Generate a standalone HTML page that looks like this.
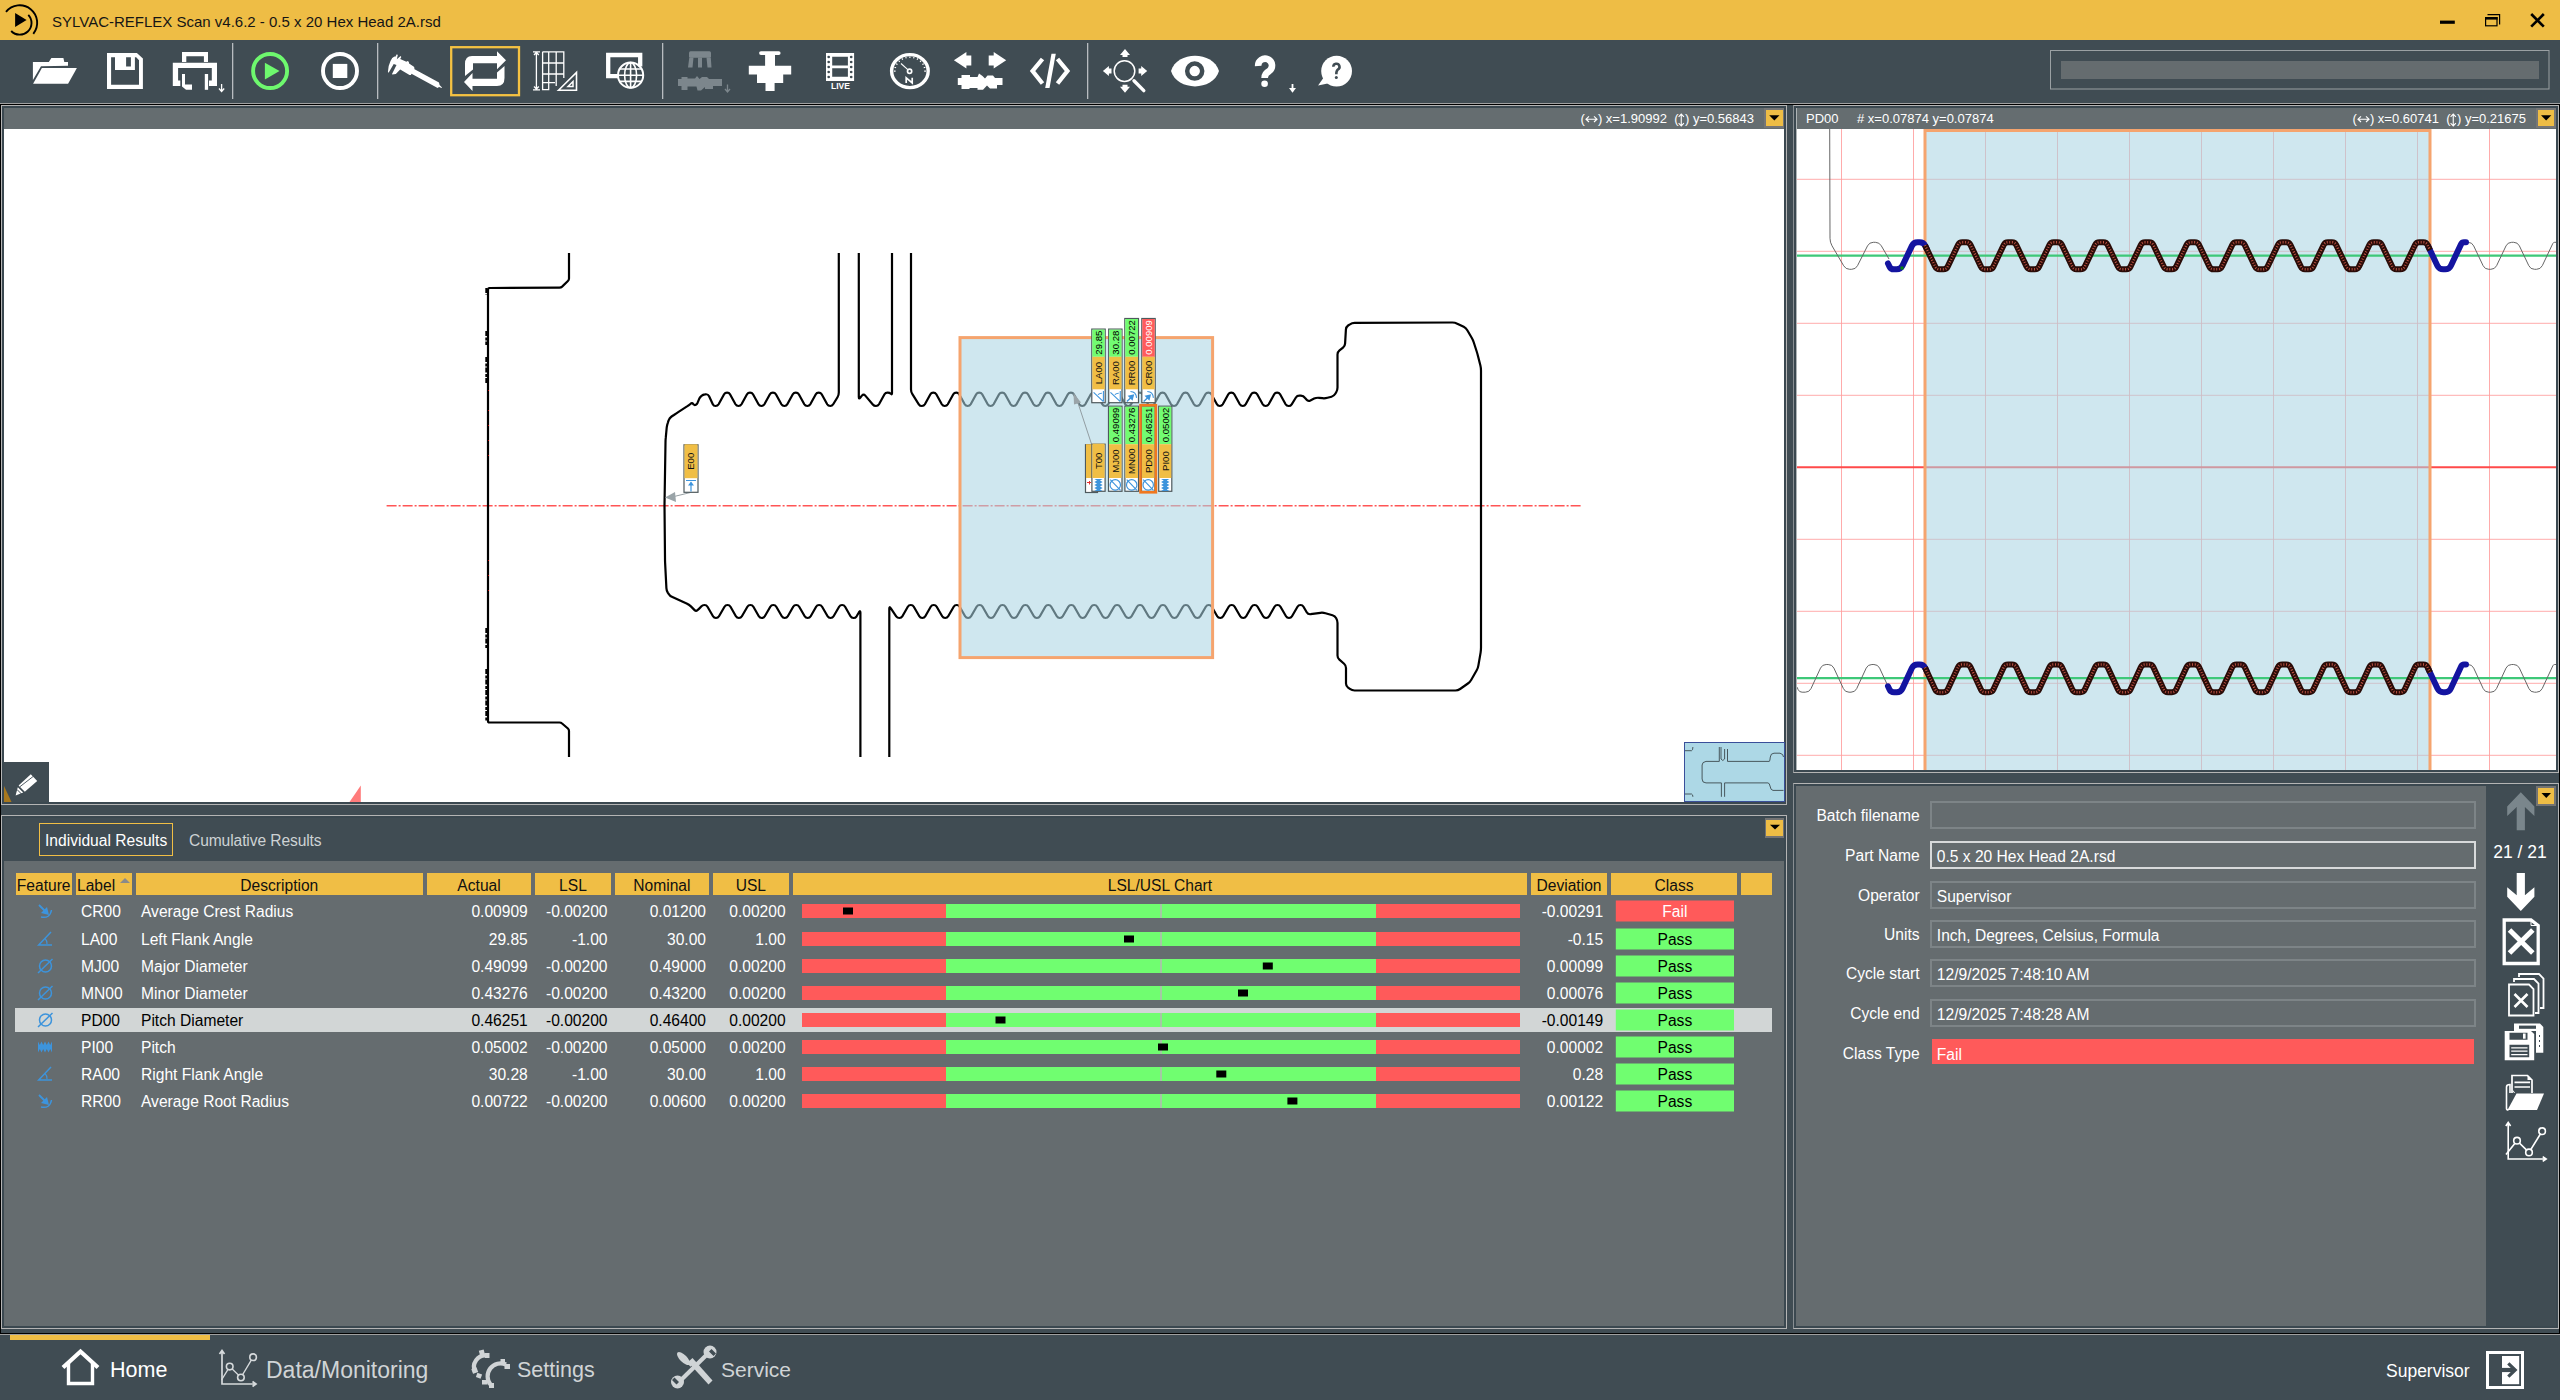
<!DOCTYPE html>
<html><head><meta charset="utf-8">
<style>
*{margin:0;padding:0;box-sizing:border-box}
html,body{width:2560px;height:1400px;overflow:hidden;background:#404c53;font-family:"Liberation Sans",sans-serif}
.a{position:absolute}
#title{left:0;top:0;width:2560px;height:40px;background:#eebd45}
#toolbar{left:0;top:40px;width:2560px;height:63px;background:#404c53}
#main{left:0;top:103px;width:2560px;height:1232px;background:#404c53;border-top:1px solid #a0a0a0}
.blk{background:#000}
.pnl{border:1px solid #b4b4b4}
.pin{border:2px solid #3b4850}
.hdr{background:#656d70;color:#fff;font-size:14px}
.gray{background:#656c6f}
.white{background:#fff}
</style></head><body>

<div id="title" class="a"></div>
<svg class="a" style="left:0;top:0" width="2560" height="103" viewBox="0 0 2560 103">
 <!-- logo -->
 <path d="M6 11.8 A17 17 0 1 1 33.3 33.8" fill="none" stroke="#000" stroke-width="1.9"/>
 <path d="M28.3 14.8 A11.5 11.5 0 0 1 11.2 31" fill="none" stroke="#000" stroke-width="1.9"/>
 <path d="M15.1 13.1 L26.6 20 L15.1 26.9Z" fill="#000"/>
 <!-- window controls -->
 <rect x="2440" y="20.6" width="14.8" height="3.2" fill="#000"/>
 <path d="M2487.5 14.6 H2499.6 V24.6" fill="none" stroke="#000" stroke-width="1.2"/>
 <rect x="2485.6" y="17.6" width="11.4" height="8.2" fill="none" stroke="#000" stroke-width="1.2"/>
 <rect x="2485" y="17" width="12.6" height="2.6" fill="#000"/>
 <path d="M2531.2 14 L2543.8 26.7 M2543.8 14 L2531.2 26.7" stroke="#000" stroke-width="2.6"/>
 <!-- toolbar bg -->
 <rect x="0" y="40" width="2560" height="63" fill="#404c53"/>
 <!-- separators -->
 <rect x="232" y="43" width="1.3" height="56" fill="#b8bcc0"/>
 <rect x="377" y="43" width="1.3" height="56" fill="#b8bcc0"/>
 <rect x="662" y="43" width="1.3" height="56" fill="#b8bcc0"/>
 <rect x="1087" y="43" width="1.3" height="56" fill="#b8bcc0"/>
 <g fill="#fff">
  <!-- folder -->
  <path d="M32.9 61.9 H48.8 L51.4 58 H63.4 L64.3 61.9 H68 V65.8 L41 66.2 L32.9 80Z"/>
  <path d="M41.9 67.9 H76.9 L68.1 83.8 H33.1Z"/>
  <!-- save -->
  <path fill-rule="evenodd" d="M107 52.9 H136.9 L142.9 58.5 V89 H107Z M111.1 57.2 V84.7 H139 V60.3 L136.2 57.2 H134.9 V70.1 H115 V57.2Z M126.1 57.2 V66.6 H130.9 V57.2Z"/>
  <!-- print -->
  <path fill-rule="evenodd" d="M182 52 H208 V61.9 H203.9 V56.2 H186.3 V61.9 H182Z"/>
  <path d="M172.8 62.8 H217 V86 H209 V80.4 H211.8 V67.9 H178.1 V80.4 H180.3 V86 H172.8Z"/>
  <path d="M182 74 H185 V84.6 H192 V89.8 H186 L182 86.5Z"/>
  <rect x="204.8" y="74" width="3.3" height="15.8"/>
  <path d="M221.6 84 V91 M219 88.5 L221.6 91.5 L224.2 88.5" stroke="#fff" stroke-width="1.3" fill="none"/>
 </g>
 <!-- play -->
 <circle cx="270.1" cy="71" r="17" fill="none" stroke="#6ef86e" stroke-width="3.9"/>
 <path d="M264.9 62.8 L279.5 71 L264.9 79.4Z" fill="#6ef86e"/>
 <!-- stop -->
 <circle cx="340" cy="71" r="17" fill="none" stroke="#fff" stroke-width="3.9"/>
 <rect x="332.8" y="63.9" width="14.5" height="14.1" fill="#fff"/>
 <!-- caliper -->
 <path fill="#fff" d="M396.8 54.2 L397.8 54.9 L396.8 59.3 L400.6 56.1 L401.3 56.9 L400.2 59 L406.4 61.7 L407.4 61 L408.8 61.7 L409.1 63.6 L413.9 66.7 L414.6 68.2 L414.1 68.9 L439 82.6 L439.6 85 L442 87.4 L441.7 88.1 L439 87.1 L437.6 88 L411.5 73.7 L410.9 75.1 L409.5 75.1 L400.2 69.6 L395.8 74.1 L392.3 74.4 L392 73.9 L396.5 65.1 L393.7 64.1 L388.6 72.7 L387.9 72 Q388 66 390.5 61 Q392 57.5 394.4 56.6 L395.3 56.8Z"/>
 <!-- repeat selected box -->
 <rect x="451.2" y="47.2" width="67.8" height="48" fill="none" stroke="#f5c242" stroke-width="2.3"/>
 <g fill="#fff">
  <path d="M465 76 V64 Q465 56 472 56 H497 V51.2 L506 60.2 L497 69.2 V63.3 H473 V69.5 L465 76Z"/>
  <path d="M504.5 66 V78 Q504.5 86 497 86 H472.5 V91 L464 82 L472.5 73 V78.8 H497 V72.5 L504.5 66Z"/>
 </g>
 <!-- grid + triangle -->
 <g fill="none" stroke="#fff" stroke-width="1.3">
  <path d="M536.4 52 V89.5 M533 51.8 H540 M533 89.8 H540 M534 55 L536.4 52.5 L538.8 55 M534 86.5 L536.4 89 L538.8 86.5"/>
  <path d="M542.6 51.8 H563.8 V78 M542.6 51.8 V89.6 H548.7 V51.8 M556.2 51.8 V86 M542.6 63 H563.8 M542.6 74 H563.8 M542.6 82.6 H555"/>
  <path d="M558.5 90.2 L576.5 72.5 V90.2Z" stroke-width="1.6"/>
  <path d="M568 86.5 L573 81.5 V86.5Z" stroke-width="1.5"/>
 </g>
 <!-- globe screen -->
 <path d="M619 76.2 H608.2 V55 H640.2 V66.5" fill="none" stroke="#fff" stroke-width="4.3"/>
 <g fill="none" stroke="#fff" stroke-width="1.6">
  <circle cx="630.6" cy="75.2" r="12.6" stroke-width="2"/>
  <ellipse cx="630.6" cy="75.2" rx="6" ry="12.6"/>
  <path d="M630.6 62.6 V87.8 M618 75.2 H643.2 M619.5 69 H641.7 M619.5 81.4 H641.7"/>
 </g>
 <!-- disabled icon -->
 <g fill="#7c868c">
  <rect x="689" y="51.2" width="22" height="6.6" rx="1.5"/>
  <path d="M689.3 57.5 H693.5 L692.5 67.5 H688Z M698 57.5 H702 V67.5 H698Z M706.5 57.5 H710.8 L711.5 67.5 H707.5Z"/>
  <path d="M678 79 H681.5 V77 H687.5 V78.5 H695 L697 76 L699.5 79 L702 77 H707 L709 79 H722 V86 H713 V89 H705 V87 L701 90.5 H697.5 L696.5 86.5 H687.5 V90 H681.5 V86 H678Z"/>
  <path d="M727.5 84.5 V91.5 M725 89 L727.5 92 L730 89" stroke="#7c868c" stroke-width="1.3" fill="none"/>
 </g>
 <!-- T shape -->
 <g fill="#fff">
  <rect x="759.1" y="51.2" width="21.5" height="3.8" rx="1.9"/>
  <path d="M765.1 55 H775 V65.8 H791.2 V74.5 H783.2 V83 H774.6 V90.9 H765.5 V83 H757 V74.5 H748.8 V65.8 H765.1Z"/>
 </g>
 <!-- film live -->
 <path fill-rule="evenodd" fill="#fff" d="M826 52.9 H854.1 V81.1 H826Z M832.2 56.8 V65.4 H847.9 V56.8Z M832.2 68.2 V76.8 H847.9 V68.2Z"/>
 <g fill="#404c53">
  <circle cx="828.7" cy="57" r="1.35"/><circle cx="828.7" cy="62" r="1.35"/><circle cx="828.7" cy="67" r="1.35"/><circle cx="828.7" cy="72" r="1.35"/><circle cx="828.7" cy="77" r="1.35"/>
  <circle cx="851.2" cy="57" r="1.35"/><circle cx="851.2" cy="62" r="1.35"/><circle cx="851.2" cy="67" r="1.35"/><circle cx="851.2" cy="72" r="1.35"/><circle cx="851.2" cy="77" r="1.35"/>
 </g>
 <text x="840.5" y="89.4" font-family="Liberation Sans" font-weight="bold" font-size="8.5" fill="#fff" text-anchor="middle">LIVE</text>
 <!-- gauge -->
 <ellipse cx="909.9" cy="71.1" rx="18.3" ry="16.5" fill="none" stroke="#fff" stroke-width="3.4"/>
 <path d="M895.6 71.1L893.9 71.1M896.1 67.7L894.4 67.3M897.5 64.5L896.0 63.7M899.8 61.8L898.6 60.7M902.8 59.7L901.9 58.4M906.2 58.4L905.8 56.9M909.9 57.9L909.9 56.4M913.6 58.4L914.0 56.9M917.0 59.7L917.9 58.4M920.0 61.8L921.2 60.7M922.3 64.5L923.8 63.7M923.7 67.7L925.4 67.3M924.2 71.1L925.9 71.1" stroke="#fff" stroke-width="1.1" fill="none"/>
 <path d="M901 63.5 L907.8 69.6" stroke="#fff" stroke-width="1.1"/>
 <circle cx="909.6" cy="71.2" r="2.1" fill="none" stroke="#fff" stroke-width="1.7"/>
 <path d="M906.2 83 V77.8 L912.2 83 V77.8" fill="none" stroke="#fff" stroke-width="1.7" stroke-linejoin="miter"/>
 <!-- arrows -->
 <g fill="#fff">
  <path d="M953.9 60.2 L966.4 52 V55.6 H971.3 V65.4 H966.4 V68.4Z"/>
  <path d="M1006.2 60.2 L993.7 52 V55.6 H988.7 V65.4 H993.7 V68.4Z"/>
  <path d="M957.8 78 H961.5 V75 H970 V77 H977.5 L979 73.5 L982.5 76 L985 78.5 L987.5 75.5 H993 L995 78 H1002.5 V85 H997 V88.5 H990 L987 85.5 L983 89.8 H977.5 V88 H969.5 V89 H961.5 V85 H957.8Z"/>
 </g>
 <!-- code -->
 <g fill="none" stroke="#fff" stroke-width="4.3">
  <path d="M1042.5 59 L1032.6 71 L1042.5 83.5"/>
  <path d="M1057.5 59 L1067.4 71 L1057.5 83.5"/>
 </g>
 <path d="M1051.5 53.8 H1055.8 L1049.5 88.1 H1045.2Z" fill="#fff"/>
 <!-- zoom -->
 <circle cx="1124.5" cy="71.1" r="10.3" fill="none" stroke="#fff" stroke-width="1.5"/>
 <path d="M1134 80.8 L1143.8 90.6" stroke="#fff" stroke-width="3.4" stroke-linecap="round"/>
 <g fill="#fff">
  <path d="M1125 49 L1130 55 H1127.5 V57 H1122.5 V55 H1120Z"/>
  <path d="M1125 92.8 L1130 86.8 H1127.5 V84.8 H1122.5 V86.8 H1120Z"/>
  <path d="M1102.9 71.1 L1108.9 66.1 V68.6 H1111.5 V73.6 H1108.9 V76.1Z"/>
  <path d="M1147.2 71.1 L1141.2 66.1 V68.6 H1138.6 V73.6 H1141.2 V76.1Z"/>
 </g>
 <!-- eye -->
 <path d="M1171 71.1 C1177 50.7 1213 50.7 1219 71.1 C1213 91.5 1177 91.5 1171 71.1Z" fill="#fff"/>
 <circle cx="1194.7" cy="71.1" r="7.5" fill="none" stroke="#404c53" stroke-width="4.5"/>
 <!-- question -->
 <path d="M1258.2 66 A6.9 6.9 0 1 1 1269.3 71 Q1264.6 73.5 1264.6 78" fill="none" stroke="#fff" stroke-width="6.6"/>
 <circle cx="1264.6" cy="83.8" r="3.3" fill="#fff"/>
 <path d="M1292.5 84 V89.5" stroke="#fff" stroke-width="1.8"/>
 <path d="M1289 88 L1292.5 92.7 L1296 88Z" fill="#fff"/>
 <!-- bubble -->
 <circle cx="1336.6" cy="71.1" r="15.4" fill="#fff"/>
 <path d="M1324 77 L1318.1 85.4 L1330 83Z" fill="#fff"/>
 <path d="M1333.3 66.8 A3.1 3.1 0 1 1 1337.8 69.6 Q1336.3 70.6 1336.3 74.3" fill="none" stroke="#404c53" stroke-width="2.6"/>
 <circle cx="1336.3" cy="77.6" r="1.5" fill="#404c53"/>
 <!-- search box -->
 <rect x="2050.5" y="50.5" width="2498.5" height="39" fill="none"/>
 <rect x="2050.5" y="50.5" width="498.5" height="38.5" fill="none" stroke="#9aa0a3" stroke-width="1"/>
 <rect x="2061" y="61" width="478" height="18" fill="#656c6f"/>
</svg>
<div class="a" style="left:52px;top:12px;font-size:15px;color:#151515;white-space:nowrap;line-height:20px">SYLVAC-REFLEX Scan v4.6.2 - 0.5 x 20 Hex Head 2A.rsd</div>

<div class="a" style="left:0;top:103px;width:2560px;height:1px;background:#a0a0a0"></div>
<div class="a blk" style="left:0;top:104px;width:2560px;height:1px"></div>
<div class="a blk" style="left:0;top:104px;width:1px;height:1230px"></div>
<div class="a blk" style="left:2559px;top:104px;width:1px;height:1230px"></div>
<div class="a blk" style="left:0;top:1333px;width:2560px;height:1px"></div>
<div class="a" style="left:0;top:1334px;width:2560px;height:1px;background:#a0a0a0"></div>

<!-- left canvas panel -->
<div class="a pnl" style="left:1px;top:105px;width:1786px;height:700px"></div>
<div class="a pin" style="left:2px;top:106px;width:1784px;height:698px"></div>
<div class="a hdr" style="left:4px;top:108px;width:1780px;height:21px"></div>
<div class="a white" style="left:4px;top:129px;width:1780px;height:673px"></div>
<svg class="a" style="left:4px;top:129px" width="1780" height="673" viewBox="4 129 1780 673">
<line x1="386.6" y1="505.7" x2="1582" y2="505.7" stroke="#ff5555" stroke-width="1.5" stroke-dasharray="10 2 2 2"/>
<path d="M569.0 253.0L569.0 278.5Q569.0 280.0 567.9 281.0L562.1 286.6Q561.0 287.6 559.5 287.6L489.5 288.0Q488.0 288.0 488.0 289.5L488.0 721.0Q488.0 722.5 489.5 722.5L559.5 722.5Q561.0 722.5 562.1 723.5L567.9 728.5Q569.0 729.5 569.0 731.0L569.0 757.0" fill="none" stroke="#000" stroke-width="2.2" stroke-linejoin="round"/>
<path d="M664.5 505.0L665.5 442.6Q665.5 440.0 665.8 437.4L666.7 427.6Q667.0 425.0 667.9 422.6L668.6 420.4Q669.5 418.0 671.6 416.5L673.9 415.0Q676.0 413.5 678.2 412.1L687.4 406.1Q689.0 405.0 690.5 403.8L690.5 403.8Q692.0 402.5 693.2 404.0L693.6 404.4Q694.5 405.5 695.8 404.8L695.8 404.8Q697.0 404.0 697.6 402.7L699.2 398.8Q700.0 397.0 701.5 395.8L701.5 395.8Q703.0 394.6 704.9 394.4L705.5 394.3Q708.0 394.0 709.1 396.3L712.8 404.2Q713.6 406.0 715.6 406.0L715.6 406.0Q717.6 406.0 718.6 404.3L724.1 394.3Q725.1 392.6 727.1 392.6L727.1 392.6Q729.1 392.6 730.0 394.3L735.5 404.3Q736.5 406.0 738.5 406.0L738.5 406.0Q740.5 406.0 741.5 404.3L747.0 394.3Q748.0 392.6 750.0 392.6L750.0 392.6Q752.0 392.6 753.0 394.3L758.5 404.3Q759.4 406.0 761.4 406.0L761.4 406.0Q763.4 406.0 764.4 404.3L769.9 394.3Q770.9 392.6 772.9 392.6L772.9 392.6Q774.9 392.6 775.9 394.3L781.4 404.3Q782.4 406.0 784.4 406.0L784.4 406.0Q786.4 406.0 787.3 404.3L792.8 394.3Q793.8 392.6 795.8 392.6L795.8 392.6Q797.8 392.6 798.8 394.3L804.3 404.3Q805.3 406.0 807.3 406.0L807.3 406.0Q809.3 406.0 810.3 404.3L815.8 394.3Q816.7 392.6 818.7 392.6L818.7 392.6Q820.7 392.6 821.7 394.3L827.2 404.3Q828.2 406.0 830.2 406.0L830.2 406.0Q832.2 406.0 833.2 404.3L837.5 397.2Q838.8 395.0 838.8 392.4L838.8 253.0" fill="none" stroke="#000" stroke-width="2.2" stroke-linejoin="round"/>
<path d="M858.8 253.0L858.8 396.9Q858.8 399.5 860.4 397.5L861.9 395.6Q863.6 393.6 865.3 395.6L872.8 404.5Q874.0 406.0 876.0 406.0L876.0 406.0Q878.0 406.0 879.0 404.3L884.5 394.3Q885.5 392.6 887.5 392.6L887.8 392.6Q889.5 392.6 890.8 393.8L890.8 393.8Q892.0 395.0 892.0 393.3L892.0 253.0" fill="none" stroke="#000" stroke-width="2.2" stroke-linejoin="round"/>
<path d="M911.0 253.0L911.0 389.4Q911.0 392.0 912.4 394.2L918.8 404.3Q919.9 406.0 921.9 406.0L921.9 406.0Q923.9 406.0 924.9 404.3L930.4 394.3Q931.3 392.6 933.3 392.6L933.3 392.6Q935.3 392.6 936.3 394.3L941.8 404.3Q942.8 406.0 944.8 406.0L944.8 406.0Q946.8 406.0 947.8 404.3L953.3 394.3Q954.3 392.6 956.3 392.6L956.3 392.6Q958.3 392.6 959.2 394.3L964.7 404.3Q965.7 406.0 967.7 406.0L967.7 406.0Q969.7 406.0 970.7 404.3L976.2 394.3Q977.2 392.6 979.2 392.6L979.2 392.6Q981.2 392.6 982.2 394.3L987.7 404.3Q988.6 406.0 990.6 406.0L990.6 406.0Q992.6 406.0 993.6 404.3L999.1 394.3Q1000.1 392.6 1002.1 392.6L1002.1 392.6Q1004.1 392.6 1005.1 394.3L1010.6 404.3Q1011.6 406.0 1013.6 406.0L1013.6 406.0Q1015.6 406.0 1016.5 404.3L1022.0 394.3Q1023.0 392.6 1025.0 392.6L1025.0 392.6Q1027.0 392.6 1028.0 394.3L1033.5 404.3Q1034.5 406.0 1036.5 406.0L1036.5 406.0Q1038.5 406.0 1039.5 404.3L1045.0 394.3Q1045.9 392.6 1047.9 392.6L1047.9 392.6Q1049.9 392.6 1050.9 394.3L1056.4 404.3Q1057.4 406.0 1059.4 406.0L1059.4 406.0Q1061.4 406.0 1062.4 404.3L1067.9 394.3Q1068.9 392.6 1070.9 392.6L1070.9 392.6Q1072.9 392.6 1073.8 394.3L1079.3 404.3Q1080.3 406.0 1082.3 406.0L1082.3 406.0Q1084.3 406.0 1085.3 404.3L1090.8 394.3Q1091.8 392.6 1093.8 392.6L1093.8 392.6Q1095.8 392.6 1096.8 394.3L1102.3 404.3Q1103.2 406.0 1105.2 406.0L1105.2 406.0Q1107.2 406.0 1108.2 404.3L1113.7 394.3Q1114.7 392.6 1116.7 392.6L1116.7 392.6Q1118.7 392.6 1119.7 394.3L1125.2 404.3Q1126.2 406.0 1128.2 406.0L1128.2 406.0Q1130.2 406.0 1131.1 404.3L1136.6 394.3Q1137.6 392.6 1139.6 392.6L1139.6 392.6Q1141.6 392.6 1142.6 394.3L1148.1 404.3Q1149.1 406.0 1151.1 406.0L1151.1 406.0Q1153.1 406.0 1154.1 404.3L1159.6 394.3Q1160.5 392.6 1162.5 392.6L1162.5 392.6Q1164.5 392.6 1165.5 394.3L1171.0 404.3Q1172.0 406.0 1174.0 406.0L1174.0 406.0Q1176.0 406.0 1177.0 404.3L1182.5 394.3Q1183.5 392.6 1185.5 392.6L1185.5 392.6Q1187.5 392.6 1188.4 394.3L1193.9 404.3Q1194.9 406.0 1196.9 406.0L1196.9 406.0Q1198.9 406.0 1199.9 404.3L1205.4 394.3Q1206.4 392.6 1208.4 392.6L1208.4 392.6Q1210.4 392.6 1211.4 394.3L1216.9 404.3Q1217.8 406.0 1219.8 406.0L1219.8 406.0Q1221.8 406.0 1222.8 404.3L1228.3 394.3Q1229.3 392.6 1231.3 392.6L1231.3 392.6Q1233.3 392.6 1234.3 394.3L1239.8 404.3Q1240.8 406.0 1242.8 406.0L1242.8 406.0Q1244.8 406.0 1245.7 404.3L1251.2 394.3Q1252.2 392.6 1254.2 392.6L1254.2 392.6Q1256.2 392.6 1257.2 394.3L1262.7 404.3Q1263.7 406.0 1265.7 406.0L1265.7 406.0Q1267.7 406.0 1268.7 404.3L1274.2 394.3Q1275.1 392.6 1277.1 392.6L1277.1 392.6Q1279.1 392.6 1280.1 394.3L1285.6 404.3Q1286.6 406.0 1288.6 406.0L1288.6 406.0Q1290.6 406.0 1291.7 404.3L1295.9 397.5Q1297.3 395.3 1299.9 395.6L1300.9 395.7Q1303.5 396.0 1305.1 398.0L1306.4 399.5Q1308.0 401.5 1310.4 400.4L1314.1 398.6Q1316.5 397.5 1319.1 397.8L1322.4 398.2Q1325.0 398.5 1327.5 397.8L1331.5 396.7Q1334.0 396.0 1335.3 393.8L1336.2 392.2Q1337.5 390.0 1337.5 387.4L1337.5 354.6Q1337.5 352.0 1339.5 350.4L1343.0 347.6Q1345.0 346.0 1345.1 343.4L1345.9 329.6Q1346.0 327.0 1348.1 325.5L1349.9 324.3Q1352.0 322.8 1354.6 322.8L1452.4 322.5Q1455.0 322.5 1457.3 323.7L1463.7 326.8Q1466.0 328.0 1467.3 330.2L1471.7 337.8Q1473.0 340.0 1473.8 342.5L1476.7 351.5Q1477.5 354.0 1478.1 356.5L1480.4 365.5Q1481.0 368.0 1481.0 370.6L1481.0 647.4Q1481.0 650.0 1480.6 652.6L1478.4 665.4Q1478.0 668.0 1476.7 670.3L1471.3 679.7Q1470.0 682.0 1467.9 683.5L1460.1 689.0Q1458.0 690.5 1455.4 690.5L1354.6 690.5Q1352.0 690.5 1349.9 688.9L1348.1 687.6Q1346.0 686.0 1346.0 683.4L1346.0 668.1Q1346.0 665.5 1344.1 663.8L1339.4 659.7Q1337.5 658.0 1337.5 655.4L1337.5 623.1Q1337.5 620.5 1336.2 618.2L1336.2 618.2Q1335.0 616.0 1332.5 615.3L1325.5 613.2Q1323.0 612.5 1320.4 612.8L1310.6 614.2Q1308.0 614.5 1306.7 612.2L1303.5 606.7Q1302.5 605.0 1300.5 605.0L1300.5 605.0Q1298.5 605.0 1297.5 606.7L1292.0 616.3Q1291.0 618.0 1289.0 618.0L1289.0 618.0Q1287.0 618.0 1286.0 616.3L1280.5 606.7Q1279.5 605.0 1277.5 605.0L1277.5 605.0Q1275.5 605.0 1274.5 606.7L1269.1 616.3Q1268.1 618.0 1266.1 618.0L1266.1 618.0Q1264.1 618.0 1263.1 616.3L1257.6 606.7Q1256.6 605.0 1254.6 605.0L1254.6 605.0Q1252.6 605.0 1251.6 606.7L1246.2 616.3Q1245.2 618.0 1243.2 618.0L1243.2 618.0Q1241.2 618.0 1240.2 616.3L1234.7 606.7Q1233.7 605.0 1231.7 605.0L1231.7 605.0Q1229.7 605.0 1228.7 606.7L1223.2 616.3Q1222.2 618.0 1220.2 618.0L1220.2 618.0Q1218.2 618.0 1217.2 616.3L1211.8 606.7Q1210.8 605.0 1208.8 605.0L1208.8 605.0Q1206.8 605.0 1205.8 606.7L1200.3 616.3Q1199.3 618.0 1197.3 618.0L1197.3 618.0Q1195.3 618.0 1194.3 616.3L1188.9 606.7Q1187.9 605.0 1185.9 605.0L1185.9 605.0Q1183.9 605.0 1182.9 606.7L1177.4 616.3Q1176.4 618.0 1174.4 618.0L1174.4 618.0Q1172.4 618.0 1171.4 616.3L1165.9 606.7Q1164.9 605.0 1162.9 605.0L1162.9 605.0Q1160.9 605.0 1159.9 606.7L1154.5 616.3Q1153.5 618.0 1151.5 618.0L1151.5 618.0Q1149.5 618.0 1148.5 616.3L1143.0 606.7Q1142.0 605.0 1140.0 605.0L1140.0 605.0Q1138.0 605.0 1137.0 606.7L1131.6 616.3Q1130.6 618.0 1128.6 618.0L1128.6 618.0Q1126.6 618.0 1125.6 616.3L1120.1 606.7Q1119.1 605.0 1117.1 605.0L1117.1 605.0Q1115.1 605.0 1114.1 606.7L1108.6 616.3Q1107.6 618.0 1105.6 618.0L1105.6 618.0Q1103.6 618.0 1102.6 616.3L1097.2 606.7Q1096.2 605.0 1094.2 605.0L1094.2 605.0Q1092.2 605.0 1091.2 606.7L1085.7 616.3Q1084.7 618.0 1082.7 618.0L1082.7 618.0Q1080.7 618.0 1079.7 616.3L1074.3 606.7Q1073.3 605.0 1071.3 605.0L1071.3 605.0Q1069.3 605.0 1068.3 606.7L1062.8 616.3Q1061.8 618.0 1059.8 618.0L1059.8 618.0Q1057.8 618.0 1056.8 616.3L1051.3 606.7Q1050.3 605.0 1048.3 605.0L1048.3 605.0Q1046.3 605.0 1045.3 606.7L1039.9 616.3Q1038.9 618.0 1036.9 618.0L1036.9 618.0Q1034.9 618.0 1033.9 616.3L1028.4 606.7Q1027.4 605.0 1025.4 605.0L1025.4 605.0Q1023.4 605.0 1022.4 606.7L1017.0 616.3Q1016.0 618.0 1014.0 618.0L1014.0 618.0Q1012.0 618.0 1011.0 616.3L1005.5 606.7Q1004.5 605.0 1002.5 605.0L1002.5 605.0Q1000.5 605.0 999.5 606.7L994.0 616.3Q993.0 618.0 991.0 618.0L991.0 618.0Q989.0 618.0 988.0 616.3L982.6 606.7Q981.6 605.0 979.6 605.0L979.6 605.0Q977.6 605.0 976.6 606.7L971.1 616.3Q970.1 618.0 968.1 618.0L968.1 618.0Q966.1 618.0 965.1 616.3L959.7 606.7Q958.7 605.0 956.7 605.0L956.7 605.0Q954.7 605.0 953.7 606.7L948.2 616.3Q947.2 618.0 945.2 618.0L945.2 618.0Q943.2 618.0 942.2 616.3L936.7 606.7Q935.7 605.0 933.7 605.0L933.7 605.0Q931.7 605.0 930.7 606.7L925.3 616.3Q924.3 618.0 922.3 618.0L922.3 618.0Q920.3 618.0 919.3 616.3L913.8 606.7Q912.8 605.0 910.8 605.0L910.8 605.0Q908.8 605.0 907.8 606.7L902.4 616.3Q901.4 618.0 899.4 618.0L899.4 618.0Q897.4 618.0 896.2 616.3L890.7 608.2Q889.3 606.0 889.3 608.6L889.3 757.0" fill="none" stroke="#000" stroke-width="2.2" stroke-linejoin="round"/>
<path d="M664.5 505.0L665.0 557.4Q665.0 560.0 665.1 562.6L666.4 588.1Q666.5 590.7 667.9 592.9L668.6 593.8Q670.0 596.0 672.4 597.1L686.6 603.5Q689.0 604.6 690.9 606.4L694.6 610.1Q696.0 611.5 697.5 610.2L697.5 610.2Q699.0 609.0 700.3 607.5L701.2 606.5Q702.5 605.0 704.5 605.0L704.5 605.0Q706.5 605.0 707.5 606.7L713.0 616.3Q714.0 618.0 716.0 618.0L716.0 618.0Q718.0 618.0 719.0 616.3L724.5 606.7Q725.5 605.0 727.5 605.0L727.5 605.0Q729.5 605.0 730.5 606.7L735.9 616.3Q736.9 618.0 738.9 618.0L738.9 618.0Q740.9 618.0 741.9 616.3L747.4 606.7Q748.4 605.0 750.4 605.0L750.4 605.0Q752.4 605.0 753.4 606.7L758.8 616.3Q759.8 618.0 761.8 618.0L761.8 618.0Q763.8 618.0 764.8 616.3L770.3 606.7Q771.3 605.0 773.3 605.0L773.3 605.0Q775.3 605.0 776.3 606.7L781.8 616.3Q782.8 618.0 784.8 618.0L784.8 618.0Q786.8 618.0 787.8 616.3L793.2 606.7Q794.2 605.0 796.2 605.0L796.2 605.0Q798.2 605.0 799.2 606.7L804.7 616.3Q805.7 618.0 807.7 618.0L807.7 618.0Q809.7 618.0 810.7 616.3L816.1 606.7Q817.1 605.0 819.1 605.0L819.1 605.0Q821.1 605.0 822.1 606.7L827.6 616.3Q828.6 618.0 830.6 618.0L830.6 618.0Q832.6 618.0 833.6 616.3L839.1 606.7Q840.1 605.0 842.1 605.0L842.1 605.0Q844.1 605.0 845.1 606.7L850.5 616.3Q851.5 618.0 853.5 618.0L853.5 618.0Q855.5 618.0 856.6 616.3L859.0 612.2Q860.4 610.0 860.4 612.6L860.4 757.0" fill="none" stroke="#000" stroke-width="2.2" stroke-linejoin="round"/>
<path d="M486.3 288V295M486.3 331V345M486.3 357V383M486.3 628V648M486.3 669V721" stroke="#000" stroke-width="2" stroke-dasharray="5 1.5 3 1"/>
<path d="M488.5 390V400M488.5 410V470M488.5 560V600" stroke="#e00" stroke-width="1" stroke-dasharray="1 14" opacity="0.8"/>
<rect x="960" y="337.6" width="252.6" height="320" fill="rgba(170,212,226,0.565)" stroke="#f5a46e" stroke-width="3"/>
<path d="M1091.5 444 L1077 400" stroke="#8a9498" stroke-width="0.9"/><path d="M1073.5 393 L1081 402.5 L1074 404.5Z" fill="#9aa4a8"/>
<path d="M690.5 492.5 L672 497" stroke="#8a9498" stroke-width="0.9"/><path d="M665 497.5 L675 492 L676 502Z" fill="#9aa4a8"/>
<rect x="684.0" y="444.8" width="14.0" height="47.5" fill="#fff" stroke="#4e595d" stroke-width="1.2"/><rect x="684.5" y="444.3" width="13.0" height="33.89999999999998" fill="#f0be45"/><text transform="translate(694.3 461.25) rotate(-90)" text-anchor="middle" font-size="9.6" fill="#111">E00</text><path d="M686.0 480.5 H696.0 M691.0 491.5 V482.5" stroke="#3d94dc" stroke-width="1.2"/><path d="M691.0 481.5 L688.0 485.5 H694.0Z" fill="#3d94dc"/>
<rect x="1091.8" y="329.1" width="13.400000000000091" height="73.59999999999997" fill="#fff" stroke="#4e595d" stroke-width="1.2"/><rect x="1092.3" y="329.6" width="12.400000000000091" height="27.19999999999999" fill="#72fc72"/><text transform="translate(1101.8 342.70000000000005) rotate(-90)" text-anchor="middle" font-size="9.6" fill="#000">29.85</text><rect x="1092.3" y="356.8" width="12.400000000000091" height="32.5" fill="#f0be45"/><text transform="translate(1101.8 373.05) rotate(-90)" text-anchor="middle" font-size="9.6" fill="#111">LA00</text><path d="M1093.6 392.45 L1103.4 401.55 M1103.4 391.05 V401.55 M1098.0 394.65 Q1100.0 393.05 1101.9 393.25" fill="none" stroke="#3d94dc" stroke-width="1.1"/>
<rect x="1108.7" y="329.1" width="13.299999999999955" height="73.59999999999997" fill="#fff" stroke="#4e595d" stroke-width="1.2"/><rect x="1109.2" y="329.6" width="12.299999999999955" height="27.19999999999999" fill="#72fc72"/><text transform="translate(1118.6499999999999 342.70000000000005) rotate(-90)" text-anchor="middle" font-size="9.6" fill="#000">30.28</text><rect x="1109.2" y="356.8" width="12.299999999999955" height="32.5" fill="#f0be45"/><text transform="translate(1118.6499999999999 373.05) rotate(-90)" text-anchor="middle" font-size="9.6" fill="#111">RA00</text><path d="M1110.4499999999998 392.45 L1120.25 401.55 M1120.25 391.05 V401.55 M1114.85 394.65 Q1116.85 393.05 1118.75 393.25" fill="none" stroke="#3d94dc" stroke-width="1.1"/>
<rect x="1124.8" y="318.5" width="13.700000000000045" height="84.19999999999999" fill="#fff" stroke="#4e595d" stroke-width="1.2"/><rect x="1125.3" y="319" width="12.700000000000045" height="37.80000000000001" fill="#72fc72"/><text transform="translate(1134.95 337.4) rotate(-90)" text-anchor="middle" font-size="9.6" fill="#000">0.00722</text><rect x="1125.3" y="356.8" width="12.700000000000045" height="32.5" fill="#f0be45"/><text transform="translate(1134.95 373.05) rotate(-90)" text-anchor="middle" font-size="9.6" fill="#111">RR00</text><path d="M1126.8500000000001 401.55 L1131.15 397.45" stroke="#3d94dc" stroke-width="1.4"/><path d="M1134.25 394.15 L1127.65 395.65 L1132.5500000000002 400.65Z" fill="#3d94dc"/><path d="M1130.45 391.45 Q1136.15 391.65 1136.5500000000002 397.85" fill="none" stroke="#3d94dc" stroke-width="1.1"/>
<rect x="1141.8" y="318.5" width="13.400000000000091" height="84.19999999999999" fill="#fff" stroke="#4e595d" stroke-width="1.2"/><rect x="1142.3" y="319" width="12.400000000000091" height="37.80000000000001" fill="#ff5c5c"/><text transform="translate(1151.8 337.4) rotate(-90)" text-anchor="middle" font-size="9.6" fill="#fff">0.00909</text><rect x="1142.3" y="356.8" width="12.400000000000091" height="32.5" fill="#f0be45"/><text transform="translate(1151.8 373.05) rotate(-90)" text-anchor="middle" font-size="9.6" fill="#111">CR00</text><path d="M1143.7 401.55 L1148.0 397.45" stroke="#3d94dc" stroke-width="1.4"/><path d="M1151.1 394.15 L1144.5 395.65 L1149.4 400.65Z" fill="#3d94dc"/><path d="M1147.3 391.45 Q1153.0 391.65 1153.4 397.85" fill="none" stroke="#3d94dc" stroke-width="1.1"/>
<rect x="1085.5" y="444.7" width="12" height="47.80000000000001" fill="#fff" stroke="#4e595d" stroke-width="1.2"/><rect x="1086" y="444.2" width="11" height="33.80000000000001" fill="#f0be45"/><text transform="translate(1094.8 461.1) rotate(-90)" text-anchor="middle" font-size="9.6" fill="#111"></text>
<path d="M1087 482.5 H1091 M1089.5 481 V484.5" stroke="#e83030" stroke-width="1"/>
<rect x="1091.9" y="444.2" width="13.199999999999818" height="47.10000000000002" fill="#fff" stroke="#4e595d" stroke-width="1.2"/><rect x="1092.4" y="443.7" width="12.199999999999818" height="34.30000000000001" fill="#f0be45"/><text transform="translate(1101.8 460.85) rotate(-90)" text-anchor="middle" font-size="9.6" fill="#111">T00</text><path d="M1094.3 478.9 H1102.7  L1100.0 480.4 L1102.7 481.9 L1100.0 483.4 L1102.7 484.9 L1100.0 486.4 L1102.7 487.9 L1100.0 489.4 L1102.7 490.9 H1094.3 L1097.0 489.4 L1094.3 487.9 L1097.0 486.4 L1094.3 484.9 L1097.0 483.4 L1094.3 481.9 L1097.0 480.4Z" fill="#3d94dc"/>
<rect x="1108.5" y="406.2" width="13.5" height="85.10000000000002" fill="#fff" stroke="#4e595d" stroke-width="1.2"/><rect x="1109" y="406.7" width="12.5" height="37.5" fill="#72fc72"/><text transform="translate(1118.55 424.95) rotate(-90)" text-anchor="middle" font-size="9.6" fill="#000">0.49099</text><rect x="1109" y="444.2" width="12.5" height="33.80000000000001" fill="#f0be45"/><text transform="translate(1118.55 461.1) rotate(-90)" text-anchor="middle" font-size="9.6" fill="#111">MJ00</text><circle cx="1115.25" cy="484.9" r="5.2" fill="none" stroke="#3d94dc" stroke-width="1.15"/><path d="M1110.25 479.7 L1120.55 490.29999999999995" stroke="#3d94dc" stroke-width="1.15"/>
<rect x="1124.9" y="406.2" width="13.599999999999909" height="85.10000000000002" fill="#fff" stroke="#4e595d" stroke-width="1.2"/><rect x="1125.4" y="406.7" width="12.599999999999909" height="37.5" fill="#72fc72"/><text transform="translate(1135.0 424.95) rotate(-90)" text-anchor="middle" font-size="9.6" fill="#000">0.43276</text><rect x="1125.4" y="444.2" width="12.599999999999909" height="33.80000000000001" fill="#f0be45"/><text transform="translate(1135.0 461.1) rotate(-90)" text-anchor="middle" font-size="9.6" fill="#111">MN00</text><circle cx="1131.7" cy="484.9" r="5.2" fill="none" stroke="#3d94dc" stroke-width="1.15"/><path d="M1126.7 479.7 L1137.0 490.29999999999995" stroke="#3d94dc" stroke-width="1.15"/>
<rect x="1141.5" y="406.2" width="13.400000000000091" height="85.10000000000002" fill="#fff" stroke="#4e595d" stroke-width="1.2"/><rect x="1142" y="406.7" width="12.400000000000091" height="37.5" fill="#72fc72"/><text transform="translate(1151.5 424.95) rotate(-90)" text-anchor="middle" font-size="9.6" fill="#000">0.46251</text><rect x="1142" y="444.2" width="12.400000000000091" height="33.80000000000001" fill="#f0be45"/><text transform="translate(1151.5 461.1) rotate(-90)" text-anchor="middle" font-size="9.6" fill="#111">PD00</text><circle cx="1148.2" cy="484.9" r="5.2" fill="none" stroke="#3d94dc" stroke-width="1.15"/><path d="M1143.2 479.7 L1153.5 490.29999999999995" stroke="#3d94dc" stroke-width="1.15"/><rect x="1140.5" y="405.2" width="15.400000000000091" height="87.10000000000002" fill="none" stroke="#f07820" stroke-width="2.6"/>
<rect x="1158.7" y="406.2" width="13.099999999999909" height="85.10000000000002" fill="#fff" stroke="#4e595d" stroke-width="1.2"/><rect x="1159.2" y="406.7" width="12.099999999999909" height="37.5" fill="#72fc72"/><text transform="translate(1168.55 424.95) rotate(-90)" text-anchor="middle" font-size="9.6" fill="#000">0.05002</text><rect x="1159.2" y="444.2" width="12.099999999999909" height="33.80000000000001" fill="#f0be45"/><text transform="translate(1168.55 461.1) rotate(-90)" text-anchor="middle" font-size="9.6" fill="#111">PI00</text><path d="M1161.05 478.9 H1169.45  L1166.75 480.4 L1169.45 481.9 L1166.75 483.4 L1169.45 484.9 L1166.75 486.4 L1169.45 487.9 L1166.75 489.4 L1169.45 490.9 H1161.05 L1163.75 489.4 L1161.05 487.9 L1163.75 486.4 L1161.05 484.9 L1163.75 483.4 L1161.05 481.9 L1163.75 480.4Z" fill="#3d94dc"/>
</svg>
<div class="a" style="left:1500px;top:110px;width:254px;text-align:right;font-size:13px;line-height:17px;color:#fff;white-space:pre">(<svg width="13" height="10" style="vertical-align:-1px" viewBox="0 0 13 10"><path d="M1 5.2H12 M4 2.4L1 5.2L4 8 M9 2.4L12 5.2L9 8" stroke="#fff" stroke-width="1.15" fill="none"/></svg>) x=1.90992  (<svg width="6.5" height="14" style="vertical-align:-4px" viewBox="0 0 6.5 14"><path d="M3.25 1V13 M0.6 3.8L3.25 1L5.9 3.8 M0.6 10.2L3.25 13L5.9 10.2" stroke="#fff" stroke-width="1.1" fill="none"/></svg>) y=0.56843</div>
<div class="a" style="left:1764px;top:108px;width:20px;height:20px;background:#767676"></div>
<div class="a" style="left:1766px;top:110px;width:16.5px;height:16px;background:#eebd45"></div>
<svg class="a" style="left:1766px;top:110px" width="17" height="16"><path d="M3.2 5.2 H13.5 L8.35 10.5Z" fill="#000"/></svg>
<!-- pencil box -->
<div class="a" style="left:4px;top:762px;width:45px;height:40px;background:#404c53"></div>
<svg class="a" style="left:4px;top:762px" width="45" height="40" viewBox="4 762 45 40">
 <path d="M4 786 L11.5 802 H4Z" fill="#a8781e"/>
 <path d="M30.8 774.2 L37.2 781 L24.8 791.8 L18.6 785.6Z" fill="#fff"/>
 <path d="M17.8 787.2 L23.2 792.6 L15.6 795.6Z" fill="#fff"/>
 <path d="M19.8 786.8 L33.5 776.2" stroke="#404c53" stroke-width="0.9"/>
 <path d="M17 789.5 L21.5 794" stroke="#404c53" stroke-width="1"/>
</svg>
<svg class="a" style="left:345px;top:785px" width="20" height="17"><path d="M15.8 0.5 V17 H4.5Z" fill="#ff7b7b"/></svg>
<!-- minimap -->
<svg class="a" style="left:1684px;top:742px" width="101" height="60" viewBox="1684 742 101 60">
 <rect x="1684.5" y="742.5" width="100" height="59" fill="#add8e6" stroke="#3a4f9a" stroke-width="1"/>
 <g fill="none" stroke="#3c4a4e" stroke-width="0.9">
  <path d="M1685 750.7 H1691.5 Q1692.9 750.5 1692.9 747"/>
  <path d="M1685 794 H1691.5 Q1692.9 794.5 1692.9 796.8"/>
  <path d="M1719.3 747 V761.4 H1706 Q1702.1 762 1702.1 765 V779 Q1702.1 782.9 1706 782.9 H1721.4 V796.8 M1724.6 796.8 V782.9 H1767.9 Q1769.5 783 1770 786 Q1770.7 790.4 1773 790.4 H1783.5"/>
  <path d="M1721 747 V759 Q1722.8 762 1724.6 759 V749 M1727.5 749 V761.4 H1769.3 Q1770 761 1770.3 757 Q1770.7 753.2 1774 753.2 H1780 Q1783.5 754 1783.5 757"/>
 </g>
</svg>


<!-- right plot panel -->
<div class="a pnl" style="left:1793px;top:105px;width:766px;height:668px;border-left-color:#888e92"></div>
<div class="a pin" style="left:1794px;top:106px;width:764px;height:666px"></div>
<div class="a hdr" style="left:1796px;top:108px;width:760px;height:21px"></div>
<div class="a white" style="left:1796px;top:129px;width:760px;height:641px"></div>
<svg class="a" style="left:1797px;top:129px" width="759" height="641" viewBox="1797 129 759 641">
<path d="M1841.5 129V770M1913.5 129V770M1985.5 129V770M2057.5 129V770M2129.5 129V770M2201.5 129V770M2273.5 129V770M2345.5 129V770M2417.5 129V770M2489.5 129V770M1797 179.3H2556M1797 251.3H2556M1797 323.3H2556M1797 395.3H2556M1797 539.3H2556M1797 611.3H2556M1797 683.3H2556M1797 755.3H2556" stroke="#ff9c9c" stroke-width="1" fill="none" opacity="0.85"/>
<path d="M1797 467.3H2556" stroke="#ff4a4a" stroke-width="2"/>
<rect x="1925" y="129" width="505" height="645" fill="rgba(170,212,226,0.565)"/>
<path d="M1925 775V130.5H2430V775" fill="none" stroke="#f5a46e" stroke-width="3"/>
<path d="M1797 255.7H2556M1797 678.2H2556" stroke="#3ec878" stroke-width="2.2"/>
<path d="M1829.7 129.0L1830.0 238.3Q1830.0 242.3 1832.0 245.8L1843.7 265.8Q1845.7 269.3 1849.7 269.3L1851.7 269.3Q1855.7 269.3 1857.5 265.7L1867.5 245.9Q1869.3 242.3 1873.3 242.3L1875.3 242.3Q1879.3 242.3 1881.3 245.8L1889.0 259.0" fill="none" stroke="#666" stroke-width="1"/>
<path d="M2462.0 242.3L2468.0 242.3Q2472.0 242.3 2473.7 245.9L2483.1 265.7Q2484.8 269.3 2488.8 269.3L2490.8 269.3Q2494.8 269.3 2496.6 265.7L2506.0 245.9Q2507.7 242.3 2511.7 242.3L2513.7 242.3Q2517.7 242.3 2519.4 245.9L2528.8 265.7Q2530.5 269.3 2534.5 269.3L2536.5 269.3Q2540.5 269.3 2542.3 265.7L2552.8 243.5Q2553.4 242.3 2554.7 242.3L2556.0 242.3" fill="none" stroke="#666" stroke-width="1"/>
<path d="M1888.0 263.5L1889.4 266.4Q1890.7 269.3 1893.9 269.3L1896.7 269.3Q1900.7 269.3 1902.5 265.7L1911.9 245.9Q1913.6 242.3 1917.6 242.3L1919.6 242.3Q1923.6 242.3 1925.3 245.9L1927.0 249.4" fill="none" stroke="#1414a0" stroke-width="6" stroke-linecap="round" stroke-linejoin="round"/>
<path d="M2428.0 245.9L2437.4 265.7Q2439.2 269.3 2443.2 269.3L2445.2 269.3Q2449.2 269.3 2450.9 265.7L2461.1 244.1Q2462.0 242.3 2464.0 242.3L2466.0 242.3" fill="none" stroke="#1414a0" stroke-width="6" stroke-linecap="round" stroke-linejoin="round"/>
<path d="M1925.0 245.2L1935.2 266.6Q1936.4 269.3 1939.4 269.3L1943.4 269.3Q1946.4 269.3 1947.7 266.6L1958.0 245.0Q1959.3 242.3 1962.3 242.3L1966.3 242.3Q1969.3 242.3 1970.6 245.0L1980.9 266.6Q1982.1 269.3 1985.1 269.3L1989.1 269.3Q1992.1 269.3 1993.4 266.6L2003.7 245.0Q2005.0 242.3 2008.0 242.3L2012.0 242.3Q2015.0 242.3 2016.3 245.0L2026.6 266.6Q2027.8 269.3 2030.8 269.3L2034.8 269.3Q2037.8 269.3 2039.1 266.6L2049.4 245.0Q2050.7 242.3 2053.7 242.3L2057.7 242.3Q2060.7 242.3 2062.0 245.0L2072.3 266.6Q2073.5 269.3 2076.5 269.3L2080.5 269.3Q2083.5 269.3 2084.8 266.6L2095.1 245.0Q2096.4 242.3 2099.4 242.3L2103.4 242.3Q2106.4 242.3 2107.7 245.0L2118.0 266.6Q2119.2 269.3 2122.2 269.3L2126.2 269.3Q2129.2 269.3 2130.5 266.6L2140.8 245.0Q2142.1 242.3 2145.1 242.3L2149.1 242.3Q2152.1 242.3 2153.4 245.0L2163.7 266.6Q2164.9 269.3 2167.9 269.3L2171.9 269.3Q2174.9 269.3 2176.2 266.6L2186.5 245.0Q2187.8 242.3 2190.8 242.3L2194.8 242.3Q2197.8 242.3 2199.1 245.0L2209.4 266.6Q2210.7 269.3 2213.7 269.3L2217.7 269.3Q2220.7 269.3 2221.9 266.6L2232.2 245.0Q2233.5 242.3 2236.5 242.3L2240.5 242.3Q2243.5 242.3 2244.8 245.0L2255.1 266.6Q2256.3 269.3 2259.3 269.3L2263.3 269.3Q2266.3 269.3 2267.6 266.6L2277.9 245.0Q2279.2 242.3 2282.2 242.3L2286.2 242.3Q2289.2 242.3 2290.5 245.0L2300.8 266.6Q2302.0 269.3 2305.0 269.3L2309.0 269.3Q2312.0 269.3 2313.3 266.6L2323.6 245.0Q2324.9 242.3 2327.9 242.3L2331.9 242.3Q2334.9 242.3 2336.2 245.0L2346.5 266.6Q2347.8 269.3 2350.8 269.3L2354.8 269.3Q2357.8 269.3 2359.0 266.6L2369.3 245.0Q2370.6 242.3 2373.6 242.3L2377.6 242.3Q2380.6 242.3 2381.9 245.0L2392.2 266.6Q2393.4 269.3 2396.4 269.3L2400.4 269.3Q2403.4 269.3 2404.7 266.6L2415.0 245.0Q2416.3 242.3 2419.3 242.3L2423.3 242.3Q2426.3 242.3 2427.6 245.0L2430.0 250.1" fill="none" stroke="#2a0c08" stroke-width="6" stroke-linejoin="round"/>
<path d="M1925.0 245.2L1935.2 266.6Q1936.4 269.3 1939.4 269.3L1943.4 269.3Q1946.4 269.3 1947.7 266.6L1958.0 245.0Q1959.3 242.3 1962.3 242.3L1966.3 242.3Q1969.3 242.3 1970.6 245.0L1980.9 266.6Q1982.1 269.3 1985.1 269.3L1989.1 269.3Q1992.1 269.3 1993.4 266.6L2003.7 245.0Q2005.0 242.3 2008.0 242.3L2012.0 242.3Q2015.0 242.3 2016.3 245.0L2026.6 266.6Q2027.8 269.3 2030.8 269.3L2034.8 269.3Q2037.8 269.3 2039.1 266.6L2049.4 245.0Q2050.7 242.3 2053.7 242.3L2057.7 242.3Q2060.7 242.3 2062.0 245.0L2072.3 266.6Q2073.5 269.3 2076.5 269.3L2080.5 269.3Q2083.5 269.3 2084.8 266.6L2095.1 245.0Q2096.4 242.3 2099.4 242.3L2103.4 242.3Q2106.4 242.3 2107.7 245.0L2118.0 266.6Q2119.2 269.3 2122.2 269.3L2126.2 269.3Q2129.2 269.3 2130.5 266.6L2140.8 245.0Q2142.1 242.3 2145.1 242.3L2149.1 242.3Q2152.1 242.3 2153.4 245.0L2163.7 266.6Q2164.9 269.3 2167.9 269.3L2171.9 269.3Q2174.9 269.3 2176.2 266.6L2186.5 245.0Q2187.8 242.3 2190.8 242.3L2194.8 242.3Q2197.8 242.3 2199.1 245.0L2209.4 266.6Q2210.7 269.3 2213.7 269.3L2217.7 269.3Q2220.7 269.3 2221.9 266.6L2232.2 245.0Q2233.5 242.3 2236.5 242.3L2240.5 242.3Q2243.5 242.3 2244.8 245.0L2255.1 266.6Q2256.3 269.3 2259.3 269.3L2263.3 269.3Q2266.3 269.3 2267.6 266.6L2277.9 245.0Q2279.2 242.3 2282.2 242.3L2286.2 242.3Q2289.2 242.3 2290.5 245.0L2300.8 266.6Q2302.0 269.3 2305.0 269.3L2309.0 269.3Q2312.0 269.3 2313.3 266.6L2323.6 245.0Q2324.9 242.3 2327.9 242.3L2331.9 242.3Q2334.9 242.3 2336.2 245.0L2346.5 266.6Q2347.8 269.3 2350.8 269.3L2354.8 269.3Q2357.8 269.3 2359.0 266.6L2369.3 245.0Q2370.6 242.3 2373.6 242.3L2377.6 242.3Q2380.6 242.3 2381.9 245.0L2392.2 266.6Q2393.4 269.3 2396.4 269.3L2400.4 269.3Q2403.4 269.3 2404.7 266.6L2415.0 245.0Q2416.3 242.3 2419.3 242.3L2423.3 242.3Q2426.3 242.3 2427.6 245.0L2430.0 250.1" fill="none" stroke="#c85848" stroke-width="2.4" stroke-dasharray="0.9 1.8" stroke-linejoin="round"/>
<path d="M1797.0 687.1L1798.2 689.7Q1799.3 692.2 1802.1 692.2L1805.3 692.2Q1809.3 692.2 1811.0 688.6L1820.5 668.1Q1822.2 664.5 1826.2 664.5L1828.2 664.5Q1832.2 664.5 1833.9 668.1L1843.4 688.6Q1845.0 692.2 1849.0 692.2L1851.0 692.2Q1855.0 692.2 1856.7 688.6L1866.2 668.1Q1867.9 664.5 1871.9 664.5L1873.9 664.5Q1877.9 664.5 1879.6 668.1L1890.0 690.6" fill="none" stroke="#666" stroke-width="1"/>
<path d="M2462.0 664.5L2468.0 664.5Q2472.0 664.5 2473.7 668.1L2483.2 688.6Q2484.8 692.2 2488.8 692.2L2490.8 692.2Q2494.8 692.2 2496.5 688.6L2506.0 668.1Q2507.7 664.5 2511.7 664.5L2513.7 664.5Q2517.7 664.5 2519.4 668.1L2528.9 688.6Q2530.5 692.2 2534.5 692.2L2536.5 692.2Q2540.5 692.2 2542.2 688.6L2552.9 665.7Q2553.4 664.5 2554.7 664.5L2556.0 664.5" fill="none" stroke="#666" stroke-width="1"/>
<path d="M1888.0 686.3L1889.4 689.2Q1890.7 692.2 1894.0 692.2L1896.7 692.2Q1900.7 692.2 1902.4 688.6L1911.9 668.1Q1913.6 664.5 1917.6 664.5L1919.6 664.5Q1923.6 664.5 1925.3 668.1L1927.0 671.8" fill="none" stroke="#1414a0" stroke-width="6" stroke-linecap="round" stroke-linejoin="round"/>
<path d="M2428.0 668.2L2437.5 688.6Q2439.2 692.2 2443.2 692.2L2445.2 692.2Q2449.2 692.2 2450.8 688.6L2461.2 666.3Q2462.0 664.5 2464.0 664.5L2466.0 664.5" fill="none" stroke="#1414a0" stroke-width="6" stroke-linecap="round" stroke-linejoin="round"/>
<path d="M1925.0 667.5L1935.2 689.5Q1936.4 692.2 1939.4 692.2L1943.4 692.2Q1946.4 692.2 1947.7 689.5L1958.0 667.2Q1959.3 664.5 1962.3 664.5L1966.3 664.5Q1969.3 664.5 1970.6 667.2L1980.9 689.5Q1982.1 692.2 1985.1 692.2L1989.1 692.2Q1992.1 692.2 1993.4 689.5L2003.7 667.2Q2005.0 664.5 2008.0 664.5L2012.0 664.5Q2015.0 664.5 2016.3 667.2L2026.6 689.5Q2027.8 692.2 2030.8 692.2L2034.8 692.2Q2037.8 692.2 2039.1 689.5L2049.4 667.2Q2050.7 664.5 2053.7 664.5L2057.7 664.5Q2060.7 664.5 2062.0 667.2L2072.3 689.5Q2073.5 692.2 2076.5 692.2L2080.5 692.2Q2083.5 692.2 2084.8 689.5L2095.1 667.2Q2096.4 664.5 2099.4 664.5L2103.4 664.5Q2106.4 664.5 2107.7 667.2L2118.0 689.5Q2119.2 692.2 2122.2 692.2L2126.2 692.2Q2129.2 692.2 2130.5 689.5L2140.8 667.2Q2142.1 664.5 2145.1 664.5L2149.1 664.5Q2152.1 664.5 2153.4 667.2L2163.7 689.5Q2164.9 692.2 2167.9 692.2L2171.9 692.2Q2174.9 692.2 2176.2 689.5L2186.5 667.2Q2187.8 664.5 2190.8 664.5L2194.8 664.5Q2197.8 664.5 2199.1 667.2L2209.4 689.5Q2210.7 692.2 2213.7 692.2L2217.7 692.2Q2220.7 692.2 2221.9 689.5L2232.2 667.2Q2233.5 664.5 2236.5 664.5L2240.5 664.5Q2243.5 664.5 2244.8 667.2L2255.1 689.5Q2256.3 692.2 2259.3 692.2L2263.3 692.2Q2266.3 692.2 2267.6 689.5L2277.9 667.2Q2279.2 664.5 2282.2 664.5L2286.2 664.5Q2289.2 664.5 2290.5 667.2L2300.8 689.5Q2302.0 692.2 2305.0 692.2L2309.0 692.2Q2312.0 692.2 2313.3 689.5L2323.6 667.2Q2324.9 664.5 2327.9 664.5L2331.9 664.5Q2334.9 664.5 2336.2 667.2L2346.5 689.5Q2347.8 692.2 2350.8 692.2L2354.8 692.2Q2357.8 692.2 2359.0 689.5L2369.3 667.2Q2370.6 664.5 2373.6 664.5L2377.6 664.5Q2380.6 664.5 2381.9 667.2L2392.2 689.5Q2393.4 692.2 2396.4 692.2L2400.4 692.2Q2403.4 692.2 2404.7 689.5L2415.0 667.2Q2416.3 664.5 2419.3 664.5L2423.3 664.5Q2426.3 664.5 2427.6 667.2L2430.0 672.5" fill="none" stroke="#2a0c08" stroke-width="6" stroke-linejoin="round"/>
<path d="M1925.0 667.5L1935.2 689.5Q1936.4 692.2 1939.4 692.2L1943.4 692.2Q1946.4 692.2 1947.7 689.5L1958.0 667.2Q1959.3 664.5 1962.3 664.5L1966.3 664.5Q1969.3 664.5 1970.6 667.2L1980.9 689.5Q1982.1 692.2 1985.1 692.2L1989.1 692.2Q1992.1 692.2 1993.4 689.5L2003.7 667.2Q2005.0 664.5 2008.0 664.5L2012.0 664.5Q2015.0 664.5 2016.3 667.2L2026.6 689.5Q2027.8 692.2 2030.8 692.2L2034.8 692.2Q2037.8 692.2 2039.1 689.5L2049.4 667.2Q2050.7 664.5 2053.7 664.5L2057.7 664.5Q2060.7 664.5 2062.0 667.2L2072.3 689.5Q2073.5 692.2 2076.5 692.2L2080.5 692.2Q2083.5 692.2 2084.8 689.5L2095.1 667.2Q2096.4 664.5 2099.4 664.5L2103.4 664.5Q2106.4 664.5 2107.7 667.2L2118.0 689.5Q2119.2 692.2 2122.2 692.2L2126.2 692.2Q2129.2 692.2 2130.5 689.5L2140.8 667.2Q2142.1 664.5 2145.1 664.5L2149.1 664.5Q2152.1 664.5 2153.4 667.2L2163.7 689.5Q2164.9 692.2 2167.9 692.2L2171.9 692.2Q2174.9 692.2 2176.2 689.5L2186.5 667.2Q2187.8 664.5 2190.8 664.5L2194.8 664.5Q2197.8 664.5 2199.1 667.2L2209.4 689.5Q2210.7 692.2 2213.7 692.2L2217.7 692.2Q2220.7 692.2 2221.9 689.5L2232.2 667.2Q2233.5 664.5 2236.5 664.5L2240.5 664.5Q2243.5 664.5 2244.8 667.2L2255.1 689.5Q2256.3 692.2 2259.3 692.2L2263.3 692.2Q2266.3 692.2 2267.6 689.5L2277.9 667.2Q2279.2 664.5 2282.2 664.5L2286.2 664.5Q2289.2 664.5 2290.5 667.2L2300.8 689.5Q2302.0 692.2 2305.0 692.2L2309.0 692.2Q2312.0 692.2 2313.3 689.5L2323.6 667.2Q2324.9 664.5 2327.9 664.5L2331.9 664.5Q2334.9 664.5 2336.2 667.2L2346.5 689.5Q2347.8 692.2 2350.8 692.2L2354.8 692.2Q2357.8 692.2 2359.0 689.5L2369.3 667.2Q2370.6 664.5 2373.6 664.5L2377.6 664.5Q2380.6 664.5 2381.9 667.2L2392.2 689.5Q2393.4 692.2 2396.4 692.2L2400.4 692.2Q2403.4 692.2 2404.7 689.5L2415.0 667.2Q2416.3 664.5 2419.3 664.5L2423.3 664.5Q2426.3 664.5 2427.6 667.2L2430.0 672.5" fill="none" stroke="#c85848" stroke-width="2.4" stroke-dasharray="0.9 1.8" stroke-linejoin="round"/>
<rect x="1917" y="1054" width="0" height="0"/>
<rect x="1900.5" y="266.5" width="3" height="3" fill="#0a8a0a"/>
</svg>
<div class="a" style="left:1806px;top:110px;font-size:13px;line-height:17px;color:#fff;white-space:pre">PD00</div>
<div class="a" style="left:1857px;top:110px;font-size:13px;line-height:17px;color:#fff;white-space:pre"># x=0.07874 y=0.07874</div>
<div class="a" style="left:2250px;top:110px;width:276px;text-align:right;font-size:13px;line-height:17px;color:#fff;white-space:pre">(<svg width="13" height="10" style="vertical-align:-1px" viewBox="0 0 13 10"><path d="M1 5.2H12 M4 2.4L1 5.2L4 8 M9 2.4L12 5.2L9 8" stroke="#fff" stroke-width="1.15" fill="none"/></svg>) x=0.60741  (<svg width="6.5" height="14" style="vertical-align:-4px" viewBox="0 0 6.5 14"><path d="M3.25 1V13 M0.6 3.8L3.25 1L5.9 3.8 M0.6 10.2L3.25 13L5.9 10.2" stroke="#fff" stroke-width="1.1" fill="none"/></svg>) y=0.21675</div>
<div class="a" style="left:2536px;top:108px;width:20px;height:20px;background:#767676"></div>
<div class="a" style="left:2538px;top:110px;width:16px;height:16px;background:#eebd45"></div>
<svg class="a" style="left:2538px;top:110px" width="16" height="16"><path d="M3 5.2 H13.3 L8.15 10.5Z" fill="#000"/></svg>
<div class="a" style="left:1796px;top:108px;width:1px;height:662px;background:#aeb4b6"></div>

<!-- results panel -->
<div class="a pnl" style="left:1px;top:815px;width:1786px;height:514px"></div>
<div class="a pin" style="left:2px;top:816px;width:1784px;height:512px"></div>
<div class="a gray" style="left:4px;top:861px;width:1780px;height:465px"></div>
<div class="a" style="left:39px;top:823px;width:134px;height:33px;border:1px solid #f0be45"></div>
<div class="a" style="left:45px;top:831px;font-size:15.6px;line-height:20px;color:#fff;white-space:nowrap">Individual Results</div>
<div class="a" style="left:189px;top:831px;font-size:15.6px;line-height:20px;color:#cdd2d4;white-space:nowrap;letter-spacing:-0.1px">Cumulative Results</div>
<div class="a" style="left:1765px;top:818px;width:19px;height:20px;background:#737373"></div>
<div class="a" style="left:1766px;top:820px;width:16.7px;height:16px;background:#eebd45"></div>
<svg class="a" style="left:1766px;top:820px" width="17" height="16"><path d="M4 4.8 H14 L9 9.5Z" fill="#000"/></svg>
<div class="a" style="left:15.8px;top:873px;width:56.2px;height:22px;background:#f0be45;color:#111;font-size:15.6px;line-height:25px;white-space:nowrap;overflow:hidden;padding-left:1px;">Feature</div>
<div class="a" style="left:76px;top:873px;width:55.8px;height:22px;background:#f0be45;color:#111;font-size:15.6px;line-height:25px;white-space:nowrap;overflow:hidden;padding-left:1px;">Label</div>
<div class="a" style="left:135.9px;top:873px;width:286.8px;height:22px;background:#f0be45;color:#111;font-size:15.6px;line-height:25px;white-space:nowrap;overflow:hidden;text-align:center;">Description</div>
<div class="a" style="left:427.1px;top:873px;width:103.9px;height:22px;background:#f0be45;color:#111;font-size:15.6px;line-height:25px;white-space:nowrap;overflow:hidden;text-align:center;">Actual</div>
<div class="a" style="left:535px;top:873px;width:75.9px;height:22px;background:#f0be45;color:#111;font-size:15.6px;line-height:25px;white-space:nowrap;overflow:hidden;text-align:center;">LSL</div>
<div class="a" style="left:615px;top:873px;width:93.8px;height:22px;background:#f0be45;color:#111;font-size:15.6px;line-height:25px;white-space:nowrap;overflow:hidden;text-align:center;">Nominal</div>
<div class="a" style="left:712.9px;top:873px;width:75.9px;height:22px;background:#f0be45;color:#111;font-size:15.6px;line-height:25px;white-space:nowrap;overflow:hidden;text-align:center;">USL</div>
<div class="a" style="left:793.1px;top:873px;width:733.7px;height:22px;background:#f0be45;color:#111;font-size:15.6px;line-height:25px;white-space:nowrap;overflow:hidden;text-align:center;">LSL/USL Chart</div>
<div class="a" style="left:1531px;top:873px;width:76.0px;height:22px;background:#f0be45;color:#111;font-size:15.6px;line-height:25px;white-space:nowrap;overflow:hidden;text-align:center;">Deviation</div>
<div class="a" style="left:1611px;top:873px;width:126.0px;height:22px;background:#f0be45;color:#111;font-size:15.6px;line-height:25px;white-space:nowrap;overflow:hidden;text-align:center;">Class</div>
<div class="a" style="left:1741px;top:873px;width:31.0px;height:22px;background:#f0be45;color:#111;font-size:15.6px;line-height:25px;white-space:nowrap;overflow:hidden;text-align:center;"></div>
<svg class="a" style="left:119px;top:877px" width="12" height="7"><path d="M1 6 L6 1 L11 6Z" fill="#8a8a8a"/></svg>
<svg class="a" style="left:0;top:895px" width="1790" height="220" viewBox="0 895 1790 220">
<rect x="802" y="904" width="144" height="14" fill="#ff5a5a"/>
<rect x="946" y="904" width="430" height="14" fill="#70fe70"/>
<rect x="1376" y="904" width="144" height="14" fill="#ff5a5a"/>
<rect x="1160" y="904" width="2" height="14" fill="#a4c8a4"/>
<rect x="843" y="907.5" width="10" height="7" fill="#000"/>
<path d="M39 905 L46 912" stroke="#3d94dc" stroke-width="1.8"/><path d="M49 915 L41 913 L47 907Z" fill="#3d94dc"/><path d="M41 917 Q50 919 51.5 910" fill="none" stroke="#3d94dc" stroke-width="1.5"/>
<rect x="1615.8" y="900.5" width="118.2" height="21" fill="#ff5a5a"/>
<rect x="802" y="932" width="144" height="14" fill="#ff5a5a"/>
<rect x="946" y="932" width="430" height="14" fill="#70fe70"/>
<rect x="1376" y="932" width="144" height="14" fill="#ff5a5a"/>
<rect x="1160" y="932" width="2" height="14" fill="#a4c8a4"/>
<rect x="1124" y="935.5" width="10" height="7" fill="#000"/>
<path d="M51 932 L38.7 945 H52" fill="none" stroke="#3d94dc" stroke-width="1.5"/><path d="M45 938.5 Q47.5 941 47 944" fill="none" stroke="#3d94dc" stroke-width="1.1"/>
<rect x="1615.8" y="928.5" width="118.2" height="21" fill="#70fe70"/>
<rect x="802" y="959" width="144" height="14" fill="#ff5a5a"/>
<rect x="946" y="959" width="430" height="14" fill="#70fe70"/>
<rect x="1376" y="959" width="144" height="14" fill="#ff5a5a"/>
<rect x="1160" y="959" width="2" height="14" fill="#a4c8a4"/>
<rect x="1262.8" y="962.5" width="10" height="7" fill="#000"/>
<circle cx="45.5" cy="966" r="6" fill="none" stroke="#3d94dc" stroke-width="1.5"/><path d="M38 973 L52.5 959" stroke="#3d94dc" stroke-width="1.5"/>
<rect x="1615.8" y="955.5" width="118.2" height="21" fill="#70fe70"/>
<rect x="802" y="986" width="144" height="14" fill="#ff5a5a"/>
<rect x="946" y="986" width="430" height="14" fill="#70fe70"/>
<rect x="1376" y="986" width="144" height="14" fill="#ff5a5a"/>
<rect x="1160" y="986" width="2" height="14" fill="#a4c8a4"/>
<rect x="1238" y="989.5" width="10" height="7" fill="#000"/>
<circle cx="45.5" cy="993" r="6" fill="none" stroke="#3d94dc" stroke-width="1.5"/><path d="M38 1000 L52.5 986" stroke="#3d94dc" stroke-width="1.5"/>
<rect x="1615.8" y="982.5" width="118.2" height="21" fill="#70fe70"/>
<rect x="15" y="1008" width="1757" height="24" fill="#d2d6d6"/>
<rect x="802" y="1013" width="144" height="14" fill="#ff5a5a"/>
<rect x="946" y="1013" width="430" height="14" fill="#70fe70"/>
<rect x="1376" y="1013" width="144" height="14" fill="#ff5a5a"/>
<rect x="1160" y="1013" width="2" height="14" fill="#a4c8a4"/>
<rect x="995.5" y="1016.5" width="10" height="7" fill="#000"/>
<circle cx="45.5" cy="1020" r="6" fill="none" stroke="#3d94dc" stroke-width="1.5"/><path d="M38 1027 L52.5 1013" stroke="#3d94dc" stroke-width="1.5"/>
<rect x="1615.8" y="1009.5" width="118.2" height="21" fill="#70fe70"/>
<rect x="802" y="1040" width="144" height="14" fill="#ff5a5a"/>
<rect x="946" y="1040" width="430" height="14" fill="#70fe70"/>
<rect x="1376" y="1040" width="144" height="14" fill="#ff5a5a"/>
<rect x="1160" y="1040" width="2" height="14" fill="#a4c8a4"/>
<rect x="1158" y="1043.5" width="10" height="7" fill="#000"/>
<path d="M38 1045 L38.0 1041.5 L39.8 1045 L41.5 1041.5 L43.2 1045 L45.0 1041.5 L46.8 1045 L48.5 1041.5 L50.2 1045 L52 1041.5 V1052.5 L52.0 1052.5 L50.2 1049 L48.5 1052.5 L46.8 1049 L45.0 1052.5 L43.2 1049 L41.5 1052.5 L39.8 1049 L38 1052.5Z" fill="#3d94dc"/>
<rect x="1615.8" y="1036.5" width="118.2" height="21" fill="#70fe70"/>
<rect x="802" y="1067" width="144" height="14" fill="#ff5a5a"/>
<rect x="946" y="1067" width="430" height="14" fill="#70fe70"/>
<rect x="1376" y="1067" width="144" height="14" fill="#ff5a5a"/>
<rect x="1160" y="1067" width="2" height="14" fill="#a4c8a4"/>
<rect x="1216.3" y="1070.5" width="10" height="7" fill="#000"/>
<path d="M51 1067 L38.7 1080 H52" fill="none" stroke="#3d94dc" stroke-width="1.5"/><path d="M45 1073.5 Q47.5 1076 47 1079" fill="none" stroke="#3d94dc" stroke-width="1.1"/>
<rect x="1615.8" y="1063.5" width="118.2" height="21" fill="#70fe70"/>
<rect x="802" y="1094" width="144" height="14" fill="#ff5a5a"/>
<rect x="946" y="1094" width="430" height="14" fill="#70fe70"/>
<rect x="1376" y="1094" width="144" height="14" fill="#ff5a5a"/>
<rect x="1160" y="1094" width="2" height="14" fill="#a4c8a4"/>
<rect x="1287.4" y="1097.5" width="10" height="7" fill="#000"/>
<path d="M39 1095 L46 1102" stroke="#3d94dc" stroke-width="1.8"/><path d="M49 1105 L41 1103 L47 1097Z" fill="#3d94dc"/><path d="M41 1107 Q50 1109 51.5 1100" fill="none" stroke="#3d94dc" stroke-width="1.5"/>
<rect x="1615.8" y="1090.5" width="118.2" height="21" fill="#70fe70"/>
</svg>
<div class="a" style="left:81px;top:902px;font-size:15.6px;line-height:20px;white-space:nowrap;color:#fff;">CR00</div>
<div class="a" style="left:141px;top:902px;font-size:15.6px;line-height:20px;white-space:nowrap;color:#fff;">Average Crest Radius</div>
<div class="a" style="left:407.79999999999995px;width:120px;text-align:right;top:902px;font-size:15.6px;line-height:20px;white-space:nowrap;color:#fff;">0.00909</div>
<div class="a" style="left:487.5px;width:120px;text-align:right;top:902px;font-size:15.6px;line-height:20px;white-space:nowrap;color:#fff;">-0.00200</div>
<div class="a" style="left:586px;width:120px;text-align:right;top:902px;font-size:15.6px;line-height:20px;white-space:nowrap;color:#fff;">0.01200</div>
<div class="a" style="left:665.6px;width:120px;text-align:right;top:902px;font-size:15.6px;line-height:20px;white-space:nowrap;color:#fff;">0.00200</div>
<div class="a" style="left:1483.2px;width:120px;text-align:right;top:902px;font-size:15.6px;line-height:20px;white-space:nowrap;color:#fff;">-0.00291</div>
<div class="a" style="left:1615.8px;width:118.2px;text-align:center;top:902px;font-size:15.6px;line-height:20px;color:#fff">Fail</div>
<div class="a" style="left:81px;top:930px;font-size:15.6px;line-height:20px;white-space:nowrap;color:#fff;">LA00</div>
<div class="a" style="left:141px;top:930px;font-size:15.6px;line-height:20px;white-space:nowrap;color:#fff;">Left Flank Angle</div>
<div class="a" style="left:407.79999999999995px;width:120px;text-align:right;top:930px;font-size:15.6px;line-height:20px;white-space:nowrap;color:#fff;">29.85</div>
<div class="a" style="left:487.5px;width:120px;text-align:right;top:930px;font-size:15.6px;line-height:20px;white-space:nowrap;color:#fff;">-1.00</div>
<div class="a" style="left:586px;width:120px;text-align:right;top:930px;font-size:15.6px;line-height:20px;white-space:nowrap;color:#fff;">30.00</div>
<div class="a" style="left:665.6px;width:120px;text-align:right;top:930px;font-size:15.6px;line-height:20px;white-space:nowrap;color:#fff;">1.00</div>
<div class="a" style="left:1483.2px;width:120px;text-align:right;top:930px;font-size:15.6px;line-height:20px;white-space:nowrap;color:#fff;">-0.15</div>
<div class="a" style="left:1615.8px;width:118.2px;text-align:center;top:930px;font-size:15.6px;line-height:20px;color:#000">Pass</div>
<div class="a" style="left:81px;top:957px;font-size:15.6px;line-height:20px;white-space:nowrap;color:#fff;">MJ00</div>
<div class="a" style="left:141px;top:957px;font-size:15.6px;line-height:20px;white-space:nowrap;color:#fff;">Major Diameter</div>
<div class="a" style="left:407.79999999999995px;width:120px;text-align:right;top:957px;font-size:15.6px;line-height:20px;white-space:nowrap;color:#fff;">0.49099</div>
<div class="a" style="left:487.5px;width:120px;text-align:right;top:957px;font-size:15.6px;line-height:20px;white-space:nowrap;color:#fff;">-0.00200</div>
<div class="a" style="left:586px;width:120px;text-align:right;top:957px;font-size:15.6px;line-height:20px;white-space:nowrap;color:#fff;">0.49000</div>
<div class="a" style="left:665.6px;width:120px;text-align:right;top:957px;font-size:15.6px;line-height:20px;white-space:nowrap;color:#fff;">0.00200</div>
<div class="a" style="left:1483.2px;width:120px;text-align:right;top:957px;font-size:15.6px;line-height:20px;white-space:nowrap;color:#fff;">0.00099</div>
<div class="a" style="left:1615.8px;width:118.2px;text-align:center;top:957px;font-size:15.6px;line-height:20px;color:#000">Pass</div>
<div class="a" style="left:81px;top:984px;font-size:15.6px;line-height:20px;white-space:nowrap;color:#fff;">MN00</div>
<div class="a" style="left:141px;top:984px;font-size:15.6px;line-height:20px;white-space:nowrap;color:#fff;">Minor Diameter</div>
<div class="a" style="left:407.79999999999995px;width:120px;text-align:right;top:984px;font-size:15.6px;line-height:20px;white-space:nowrap;color:#fff;">0.43276</div>
<div class="a" style="left:487.5px;width:120px;text-align:right;top:984px;font-size:15.6px;line-height:20px;white-space:nowrap;color:#fff;">-0.00200</div>
<div class="a" style="left:586px;width:120px;text-align:right;top:984px;font-size:15.6px;line-height:20px;white-space:nowrap;color:#fff;">0.43200</div>
<div class="a" style="left:665.6px;width:120px;text-align:right;top:984px;font-size:15.6px;line-height:20px;white-space:nowrap;color:#fff;">0.00200</div>
<div class="a" style="left:1483.2px;width:120px;text-align:right;top:984px;font-size:15.6px;line-height:20px;white-space:nowrap;color:#fff;">0.00076</div>
<div class="a" style="left:1615.8px;width:118.2px;text-align:center;top:984px;font-size:15.6px;line-height:20px;color:#000">Pass</div>
<div class="a" style="left:81px;top:1011px;font-size:15.6px;line-height:20px;white-space:nowrap;color:#000;">PD00</div>
<div class="a" style="left:141px;top:1011px;font-size:15.6px;line-height:20px;white-space:nowrap;color:#000;">Pitch Diameter</div>
<div class="a" style="left:407.79999999999995px;width:120px;text-align:right;top:1011px;font-size:15.6px;line-height:20px;white-space:nowrap;color:#000;">0.46251</div>
<div class="a" style="left:487.5px;width:120px;text-align:right;top:1011px;font-size:15.6px;line-height:20px;white-space:nowrap;color:#000;">-0.00200</div>
<div class="a" style="left:586px;width:120px;text-align:right;top:1011px;font-size:15.6px;line-height:20px;white-space:nowrap;color:#000;">0.46400</div>
<div class="a" style="left:665.6px;width:120px;text-align:right;top:1011px;font-size:15.6px;line-height:20px;white-space:nowrap;color:#000;">0.00200</div>
<div class="a" style="left:1483.2px;width:120px;text-align:right;top:1011px;font-size:15.6px;line-height:20px;white-space:nowrap;color:#000;">-0.00149</div>
<div class="a" style="left:1615.8px;width:118.2px;text-align:center;top:1011px;font-size:15.6px;line-height:20px;color:#000">Pass</div>
<div class="a" style="left:81px;top:1038px;font-size:15.6px;line-height:20px;white-space:nowrap;color:#fff;">PI00</div>
<div class="a" style="left:141px;top:1038px;font-size:15.6px;line-height:20px;white-space:nowrap;color:#fff;">Pitch</div>
<div class="a" style="left:407.79999999999995px;width:120px;text-align:right;top:1038px;font-size:15.6px;line-height:20px;white-space:nowrap;color:#fff;">0.05002</div>
<div class="a" style="left:487.5px;width:120px;text-align:right;top:1038px;font-size:15.6px;line-height:20px;white-space:nowrap;color:#fff;">-0.00200</div>
<div class="a" style="left:586px;width:120px;text-align:right;top:1038px;font-size:15.6px;line-height:20px;white-space:nowrap;color:#fff;">0.05000</div>
<div class="a" style="left:665.6px;width:120px;text-align:right;top:1038px;font-size:15.6px;line-height:20px;white-space:nowrap;color:#fff;">0.00200</div>
<div class="a" style="left:1483.2px;width:120px;text-align:right;top:1038px;font-size:15.6px;line-height:20px;white-space:nowrap;color:#fff;">0.00002</div>
<div class="a" style="left:1615.8px;width:118.2px;text-align:center;top:1038px;font-size:15.6px;line-height:20px;color:#000">Pass</div>
<div class="a" style="left:81px;top:1065px;font-size:15.6px;line-height:20px;white-space:nowrap;color:#fff;">RA00</div>
<div class="a" style="left:141px;top:1065px;font-size:15.6px;line-height:20px;white-space:nowrap;color:#fff;">Right Flank Angle</div>
<div class="a" style="left:407.79999999999995px;width:120px;text-align:right;top:1065px;font-size:15.6px;line-height:20px;white-space:nowrap;color:#fff;">30.28</div>
<div class="a" style="left:487.5px;width:120px;text-align:right;top:1065px;font-size:15.6px;line-height:20px;white-space:nowrap;color:#fff;">-1.00</div>
<div class="a" style="left:586px;width:120px;text-align:right;top:1065px;font-size:15.6px;line-height:20px;white-space:nowrap;color:#fff;">30.00</div>
<div class="a" style="left:665.6px;width:120px;text-align:right;top:1065px;font-size:15.6px;line-height:20px;white-space:nowrap;color:#fff;">1.00</div>
<div class="a" style="left:1483.2px;width:120px;text-align:right;top:1065px;font-size:15.6px;line-height:20px;white-space:nowrap;color:#fff;">0.28</div>
<div class="a" style="left:1615.8px;width:118.2px;text-align:center;top:1065px;font-size:15.6px;line-height:20px;color:#000">Pass</div>
<div class="a" style="left:81px;top:1092px;font-size:15.6px;line-height:20px;white-space:nowrap;color:#fff;">RR00</div>
<div class="a" style="left:141px;top:1092px;font-size:15.6px;line-height:20px;white-space:nowrap;color:#fff;">Average Root Radius</div>
<div class="a" style="left:407.79999999999995px;width:120px;text-align:right;top:1092px;font-size:15.6px;line-height:20px;white-space:nowrap;color:#fff;">0.00722</div>
<div class="a" style="left:487.5px;width:120px;text-align:right;top:1092px;font-size:15.6px;line-height:20px;white-space:nowrap;color:#fff;">-0.00200</div>
<div class="a" style="left:586px;width:120px;text-align:right;top:1092px;font-size:15.6px;line-height:20px;white-space:nowrap;color:#fff;">0.00600</div>
<div class="a" style="left:665.6px;width:120px;text-align:right;top:1092px;font-size:15.6px;line-height:20px;white-space:nowrap;color:#fff;">0.00200</div>
<div class="a" style="left:1483.2px;width:120px;text-align:right;top:1092px;font-size:15.6px;line-height:20px;white-space:nowrap;color:#fff;">0.00122</div>
<div class="a" style="left:1615.8px;width:118.2px;text-align:center;top:1092px;font-size:15.6px;line-height:20px;color:#000">Pass</div>

<!-- info panel -->
<div class="a pnl" style="left:1793px;top:783px;width:766px;height:546px;border-left-color:#888e92"></div>
<div class="a pin" style="left:1794px;top:784px;width:764px;height:544px"></div>
<div class="a gray" style="left:1796px;top:786px;width:690px;height:540px"></div>
<div class="a" style="left:1700px;width:219.6px;text-align:right;top:806.4px;font-size:15.6px;line-height:20px;color:#fff;white-space:nowrap">Batch filename</div>
<div class="a" style="left:1930.3px;top:801.4px;width:545.4px;height:28px;border:2px solid #7d8487"></div>
<div class="a" style="left:1936.8px;top:807.4px;font-size:15.6px;line-height:20px;color:#fff;white-space:nowrap"></div>
<div class="a" style="left:1700px;width:219.6px;text-align:right;top:846px;font-size:15.6px;line-height:20px;color:#fff;white-space:nowrap">Part Name</div>
<div class="a" style="left:1930.3px;top:841px;width:545.4px;height:28px;border:2px solid #d8dadb"></div>
<div class="a" style="left:1936.8px;top:847px;font-size:15.6px;line-height:20px;color:#fff;white-space:nowrap">0.5 x 20 Hex Head 2A.rsd</div>
<div class="a" style="left:1700px;width:219.6px;text-align:right;top:885.7px;font-size:15.6px;line-height:20px;color:#fff;white-space:nowrap">Operator</div>
<div class="a" style="left:1930.3px;top:880.7px;width:545.4px;height:28px;border:2px solid #7d8487"></div>
<div class="a" style="left:1936.8px;top:886.7px;font-size:15.6px;line-height:20px;color:#fff;white-space:nowrap">Supervisor</div>
<div class="a" style="left:1700px;width:219.6px;text-align:right;top:924.7px;font-size:15.6px;line-height:20px;color:#fff;white-space:nowrap">Units</div>
<div class="a" style="left:1930.3px;top:919.7px;width:545.4px;height:28px;border:2px solid #7d8487"></div>
<div class="a" style="left:1936.8px;top:925.7px;font-size:15.6px;line-height:20px;color:#fff;white-space:nowrap">Inch, Degrees, Celsius, Formula</div>
<div class="a" style="left:1700px;width:219.6px;text-align:right;top:964px;font-size:15.6px;line-height:20px;color:#fff;white-space:nowrap">Cycle start</div>
<div class="a" style="left:1930.3px;top:959px;width:545.4px;height:28px;border:2px solid #7d8487"></div>
<div class="a" style="left:1936.8px;top:965px;font-size:15.6px;line-height:20px;color:#fff;white-space:nowrap">12/9/2025 7:48:10 AM</div>
<div class="a" style="left:1700px;width:219.6px;text-align:right;top:1003.6px;font-size:15.6px;line-height:20px;color:#fff;white-space:nowrap">Cycle end</div>
<div class="a" style="left:1930.3px;top:998.6px;width:545.4px;height:28px;border:2px solid #7d8487"></div>
<div class="a" style="left:1936.8px;top:1004.6px;font-size:15.6px;line-height:20px;color:#fff;white-space:nowrap">12/9/2025 7:48:28 AM</div>
<div class="a" style="left:1700px;width:219.6px;text-align:right;top:1044.3px;font-size:15.6px;line-height:20px;color:#fff;white-space:nowrap">Class Type</div>
<div class="a" style="left:1931.8px;top:1039.3px;width:542px;height:24.6px;background:#ff5a5a"></div>
<div class="a" style="left:1936.8px;top:1045.3px;font-size:15.6px;line-height:20px;color:#fff;white-space:nowrap">Fail</div>
<div class="a" style="left:2536px;top:786px;width:20px;height:20px;background:#737373"></div>
<div class="a" style="left:2538px;top:788px;width:16px;height:16px;background:#eebd45"></div>
<svg class="a" style="left:2538px;top:788px" width="16" height="16"><path d="M3.5 5 H13 L8.25 10Z" fill="#000"/></svg>
<div class="a" style="left:2486px;top:842px;width:68px;text-align:center;font-size:17.5px;line-height:20px;color:#fff;white-space:nowrap">21 / 21</div>
<svg class="a" style="left:2486px;top:786px" width="72" height="400" viewBox="2486 786 72 400">
 <path d="M2520.8 792.2 L2534.4 806.5 V816 L2524.9 807.1 V830.2 H2516.7 V807.1 L2507.2 816 V806.5Z" fill="#7a868c"/>
 <path d="M2520.8 911 L2534.4 896.7 V887.2 L2524.9 895.3 V873 H2516.7 V895.3 L2507.2 887.2 V896.7Z" fill="#fff"/>
 <path d="M2504.2 920 H2531 L2538.2 925.5 V963.5 H2504.2Z" fill="none" stroke="#fff" stroke-width="3.3"/><path d="M2531 920 V925.5 H2538.2" fill="none" stroke="#fff" stroke-width="1"/>
 <path d="M2509.5 930 L2532.8 953 M2532.8 930 L2509.5 953" stroke="#fff" stroke-width="5"/>
 <g fill="none" stroke="#fff" stroke-width="1.8">
  <path d="M2519 977 V974 H2539 L2543.5 978.5 V1008 H2540"/>
  <path d="M2514 982 V979 H2534 L2538.5 983.5 V1013 H2535"/>
 </g>
 <path d="M2509 984.5 H2529 L2533.5 989 V1015.5 H2509Z" fill="#404c53" stroke="#fff" stroke-width="1.8"/>
 <path d="M2514.5 994 L2527.5 1007 M2527.5 994 L2514.5 1007" stroke="#fff" stroke-width="2.6"/>
 <!-- save multi -->
 <path d="M2514 1023.6 H2540 L2543.3 1027 V1052.8 H2536 V1031 H2514Z" fill="#fff"/>
 <rect x="2519" y="1025.6" width="17" height="3.2" fill="#404c53"/>
 <path d="M2539.5 1035 V1037 M2539.5 1040 V1042 M2539.5 1045 V1047" stroke="#404c53" stroke-width="1"/>
 <path fill-rule="evenodd" fill="#fff" d="M2504.7 1030.9 H2531 L2534.2 1034 V1060.2 H2504.7Z M2509.5 1032.8 V1039.8 H2527.5 V1032.8Z M2509.5 1044.8 V1057.2 H2529.2 V1044.8Z"/>
 <rect x="2523" y="1033.5" width="2.6" height="5.2" fill="#fff"/>
 <path d="M2511.2 1047.8 H2527.5 M2511.2 1051.2 H2527.5 M2511.2 1054.6 H2527.5" stroke="#fff" stroke-width="1.3"/>
 <!-- folder docs -->
 <path d="M2510 1093 V1084.5 Q2506.5 1084.5 2506.5 1087 V1108.5 Q2506.5 1110 2508.5 1110" fill="none" stroke="#fff" stroke-width="1.6"/>
 <path d="M2512 1093 V1075.5 H2527.5 L2532 1080 V1093" fill="#404c53" stroke="#fff" stroke-width="1.7"/>
 <path d="M2527.5 1075.5 V1080 H2532Z" fill="#fff"/>
 <path d="M2514.5 1082.3 H2530 M2514.5 1087 H2530" stroke="#fff" stroke-width="1.7"/>
 <path d="M2507.5 1110 L2516.5 1093.5 H2544 L2537 1110Z" fill="#fff"/>
 <path d="M2513 1090.5 L2514.5 1093" stroke="#fff" stroke-width="1"/>
 <!-- chart -->
 <g fill="none" stroke="#fff" stroke-width="1.6">
  <path d="M2508.2 1122.5 V1159 H2546.2 M2505.8 1126 L2508.2 1122.5 L2510.6 1126 M2542.7 1156.6 L2546.2 1159 L2542.7 1161.4"/>
  <path d="M2506 1154.6 L2517 1140.7 L2529 1152.4 L2542.1 1131.2"/>
  <circle cx="2517" cy="1140.7" r="3.3" fill="#404c53"/>
  <circle cx="2529" cy="1152.4" r="3.3" fill="#404c53"/>
  <circle cx="2542.1" cy="1131.2" r="3.3" fill="#404c53"/>
 </g>
</svg>

<div class="a" style="left:10px;top:1335px;width:200px;height:5px;background:#eebd45"></div>
<svg class="a" style="left:0;top:1335px" width="2560" height="65" viewBox="0 1335 2560 65">
 <!-- home -->
 <path d="M63 1367.5 L80.5 1351.5 L98 1367.5" fill="none" stroke="#fff" stroke-width="4.2"/><path d="M68.5 1363 V1383.5 H92.5 V1363" fill="none" stroke="#fff" stroke-width="3.4"/>
 <!-- data -->
 <g fill="none" stroke="#d6dadc" stroke-width="1.4">
  <path d="M222 1350.5 V1384 H256 M219.5 1354 L222 1350.5 L224.5 1354 M252.5 1381.5 L256 1384 L252.5 1386.5" stroke-width="1.7"/>
  <path d="M221.5 1380 L229.7 1366.6 L240.9 1377.5 L253.1 1357.2"/>
 </g>
 <g fill="#404c53" stroke="#d6dadc" stroke-width="1.6">
  <circle cx="229.7" cy="1366.6" r="3.3"/><circle cx="240.9" cy="1377.5" r="3.3"/><circle cx="253.1" cy="1357.2" r="3.3"/>
 </g>
 <!-- settings gear -->
 <g fill="none" stroke="#d0d4d6" stroke-width="4.2">
  <path d="M475.5 1372.5 A11.5 11.5 0 0 1 487.5 1355.5"/>
  <path d="M506 1364.5 A13 13 0 0 0 490.5 1384.5"/>
 </g>
 <g fill="#d0d4d6">
  <rect x="479.5" y="1350" width="5" height="5.5" transform="rotate(-15 482 1353)"/>
  <rect x="485" y="1353" width="4.5" height="5"/>
  <rect x="472" y="1368" width="5.5" height="5" transform="rotate(-20 474.7 1370.5)"/>
  <rect x="476.5" y="1373.5" width="5" height="4.5" transform="rotate(20 479 1375.7)"/>
  <rect x="500.5" y="1359" width="4.5" height="5.5"/>
  <rect x="504.5" y="1364" width="5.5" height="5"/>
  <rect x="482" y="1380" width="5.5" height="4.5"/>
  <rect x="489" y="1383" width="5" height="5"/>
 </g>
 <!-- service tools -->
 <g fill="#d0d4d6">
  <ellipse cx="683.5" cy="1358.5" rx="8.5" ry="3.6" transform="rotate(45 683.5 1358.5)"/>
  <path d="M688 1362 L692.5 1358 L712.5 1380.5 L708.5 1384.5Z"/>
  <rect x="686.5" y="1362" width="6" height="3" transform="rotate(45 689.5 1363.5)"/>
 </g>
 <path d="M679.5 1381.5 L708.5 1353" stroke="#d0d4d6" stroke-width="4.2"/>
 <circle cx="677.5" cy="1382" r="6.5" fill="#d0d4d6"/>
 <circle cx="710" cy="1352" r="6.5" fill="#d0d4d6"/>
 <path d="M672 1380 L674.5 1377.5 L679 1382 L676.5 1384.5Z M716 1353.5 L713.5 1356 L709 1351.5 L711.5 1349Z" fill="#404c53"/>
 <path d="M669 1379 L676 1372 M718.5 1355 L711.5 1362" stroke="#404c53" stroke-width="0"/>
 <path d="M671.5 1376 L680 1384.5 L676 1388.5 L667.5 1380Z M716 1348 L707.5 1356.5 L711.5 1360.5 L720 1352Z" fill="#404c53" opacity="0"/>
 <!-- logout -->
 <rect x="2487.5" y="1352.5" width="35" height="35" fill="none" stroke="#fff" stroke-width="3"/>
 <rect x="2502" y="1356" width="17.2" height="28.2" fill="#fff"/>
 <path d="M2501.5 1370 H2513" stroke="#404c53" stroke-width="4.2"/><path d="M2508.3 1363.3 L2515.2 1370 L2508.3 1376.7" fill="none" stroke="#404c53" stroke-width="3.2"/>
</svg>
<div class="a" style="left:110px;top:1356px;font-size:21.5px;line-height:28px;color:#fff;white-space:nowrap">Home</div>
<div class="a" style="left:266px;top:1356px;font-size:23px;line-height:28px;color:#d0d4d6;white-space:nowrap">Data/Monitoring</div>
<div class="a" style="left:517px;top:1356px;font-size:21.5px;line-height:28px;color:#d0d4d6;white-space:nowrap">Settings</div>
<div class="a" style="left:721px;top:1356px;font-size:21px;line-height:28px;color:#d0d4d6;white-space:nowrap">Service</div>
<div class="a" style="left:2386px;top:1359px;font-size:17.5px;line-height:24px;color:#fff;white-space:nowrap">Supervisor</div>

</body></html>
